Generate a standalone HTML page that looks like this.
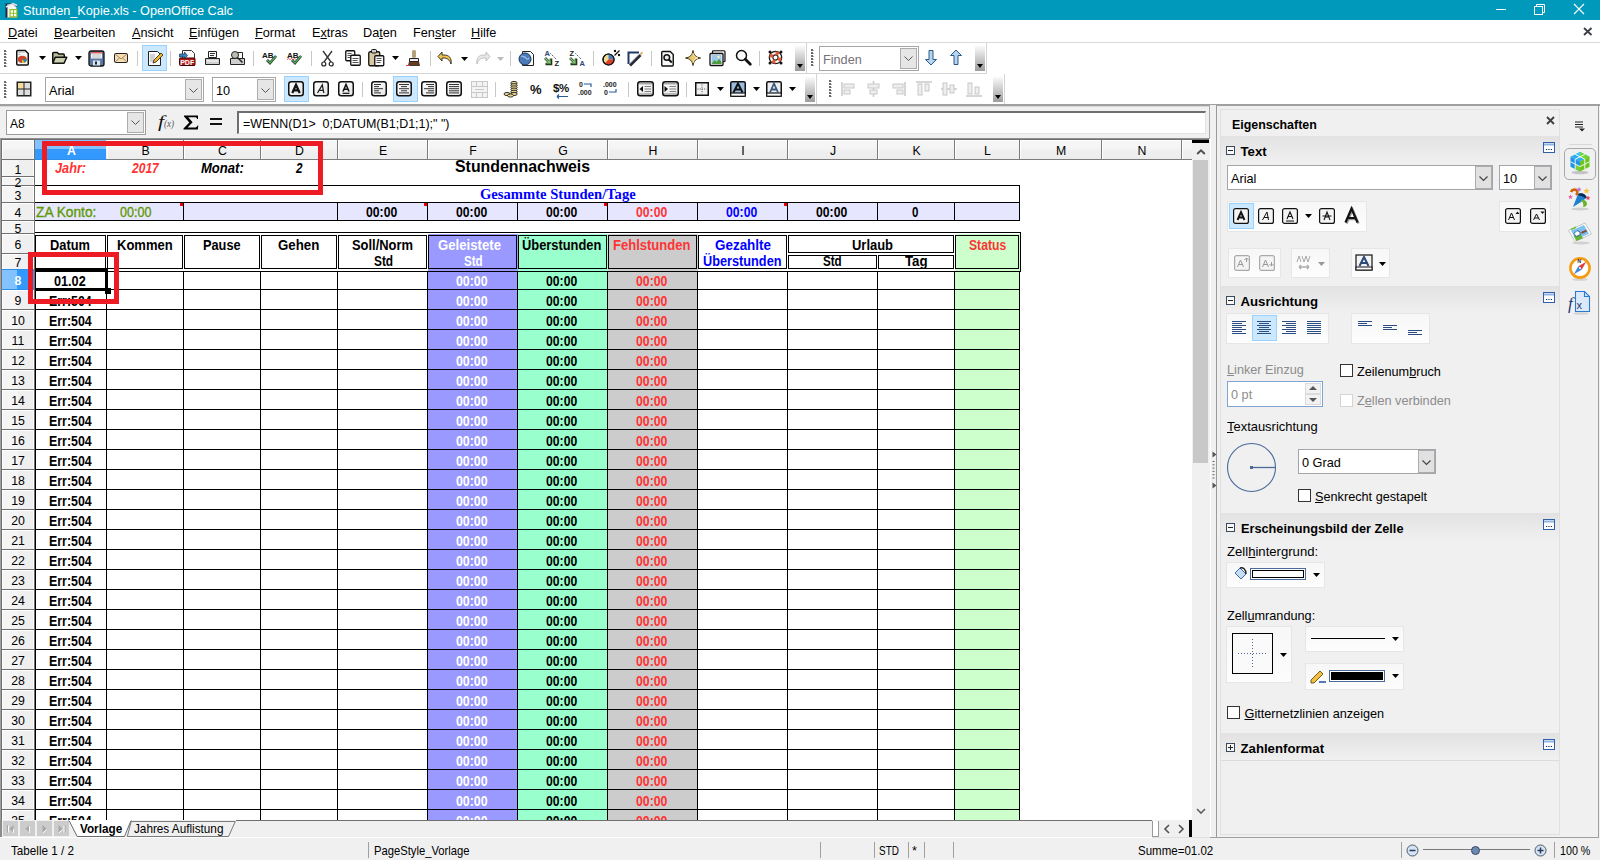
<!DOCTYPE html><html><head><meta charset="utf-8"><style>
*{margin:0;padding:0;box-sizing:border-box}
html,body{width:1600px;height:860px;overflow:hidden;background:#fff;font-family:"Liberation Sans",sans-serif;position:relative}
body>div,div.a{position:absolute}
.t{position:absolute;white-space:nowrap;line-height:1}
svg{position:absolute;overflow:visible}
u{text-decoration:underline;text-decoration-thickness:1px;text-underline-offset:0.5px}
</style></head><body><div style="left:0px;top:0px;width:1600px;height:20px;background:#0099bc"></div>
<svg style="left:3px;top:2px;" width="16" height="16" viewBox="0 0 16 16"><path d="M2.5 1.5h8l3 3v11h-11z" fill="#1c2638"/><path d="M4.5 2.5h6l3 3v10h-9z" fill="#f4f4f4" stroke="#9aa4ae" stroke-width="0.6"/><path d="M3 5L10 1.5 14 3.5" fill="none" stroke="#dfe6ea" stroke-width="1.4"/><rect x="6.5" y="7" width="8" height="8.5" fill="#8cc21f"/><path d="M7.7 8.3h2.3v2.5H7.7zM11 8.3h2.3v2.5H11zM7.7 11.8h2.3v2.5H7.7zM11 11.8h2.3v2.5H11z" fill="#fff"/></svg>
<div class="t" style="left:23px;top:5px;font-size:12.7px;color:#fff">Stunden_Kopie.xls - OpenOffice Calc</div>
<div style="left:1496px;top:9px;width:10px;height:1px;background:#fff"></div>
<svg style="left:1533px;top:3px;" width="13" height="13" viewBox="0 0 13 13"><rect x="1.5" y="3.5" width="8" height="8" fill="none" stroke="#fff"/><path d="M3.5 3.5V1.5h8v8h-2" fill="none" stroke="#fff"/></svg>
<svg style="left:1573px;top:3px;" width="12" height="12" viewBox="0 0 12 12"><path d="M1 1L11 11M11 1L1 11" stroke="#fff" stroke-width="1.1"/></svg>
<div class="t" style="left:8px;top:27px;font-size:12.7px;color:#000"><u>D</u>atei</div>
<div class="t" style="left:54px;top:27px;font-size:12.7px;color:#000"><u>B</u>earbeiten</div>
<div class="t" style="left:132px;top:27px;font-size:12.7px;color:#000"><u>A</u>nsicht</div>
<div class="t" style="left:189px;top:27px;font-size:12.7px;color:#000"><u>E</u>infügen</div>
<div class="t" style="left:255px;top:27px;font-size:12.7px;color:#000"><u>F</u>ormat</div>
<div class="t" style="left:312px;top:27px;font-size:12.7px;color:#000">E<u>x</u>tras</div>
<div class="t" style="left:363px;top:27px;font-size:12.7px;color:#000">Da<u>t</u>en</div>
<div class="t" style="left:413px;top:27px;font-size:12.7px;color:#000">Fen<u>s</u>ter</div>
<div class="t" style="left:471px;top:27px;font-size:12.7px;color:#000"><u>H</u>ilfe</div>
<svg style="left:1583px;top:27px;" width="10" height="9" viewBox="0 0 10 9"><path d="M1 1L8.5 8M8.5 1L1 8" stroke="#3a3f45" stroke-width="1.8"/></svg>
<div style="left:0px;top:42px;width:1600px;height:1px;background:#dadada"></div>
<div style="left:0px;top:43px;width:1600px;height:31px;background:#fff"></div>
<div style="left:0px;top:73px;width:806px;height:1px;background:#d4d4d4"></div>
<div style="left:806px;top:73px;width:180px;height:1px;background:#d4d4d4"></div>
<div style="left:0px;top:74px;width:1600px;height:30px;background:#fff"></div>
<div style="left:0px;top:104px;width:1600px;height:2px;background:#a0a0a0"></div>
<div style="left:0px;top:106px;width:1600px;height:1px;background:#d8d8d8"></div>
<div style="left:4px;top:50px;width:1.5px;height:1.5px;background:#6a6a6a"></div>
<div style="left:5.5px;top:51px;width:1px;height:1px;background:#b0b0b0"></div>
<div style="left:4px;top:53px;width:1.5px;height:1.5px;background:#6a6a6a"></div>
<div style="left:5.5px;top:54px;width:1px;height:1px;background:#b0b0b0"></div>
<div style="left:4px;top:56px;width:1.5px;height:1.5px;background:#6a6a6a"></div>
<div style="left:5.5px;top:57px;width:1px;height:1px;background:#b0b0b0"></div>
<div style="left:4px;top:59px;width:1.5px;height:1.5px;background:#6a6a6a"></div>
<div style="left:5.5px;top:60px;width:1px;height:1px;background:#b0b0b0"></div>
<div style="left:4px;top:62px;width:1.5px;height:1.5px;background:#6a6a6a"></div>
<div style="left:5.5px;top:63px;width:1px;height:1px;background:#b0b0b0"></div>
<div style="left:4px;top:65px;width:1.5px;height:1.5px;background:#6a6a6a"></div>
<div style="left:5.5px;top:66px;width:1px;height:1px;background:#b0b0b0"></div>
<div style="left:4px;top:81px;width:1.5px;height:1.5px;background:#6a6a6a"></div>
<div style="left:5.5px;top:82px;width:1px;height:1px;background:#b0b0b0"></div>
<div style="left:4px;top:84px;width:1.5px;height:1.5px;background:#6a6a6a"></div>
<div style="left:5.5px;top:85px;width:1px;height:1px;background:#b0b0b0"></div>
<div style="left:4px;top:87px;width:1.5px;height:1.5px;background:#6a6a6a"></div>
<div style="left:5.5px;top:88px;width:1px;height:1px;background:#b0b0b0"></div>
<div style="left:4px;top:90px;width:1.5px;height:1.5px;background:#6a6a6a"></div>
<div style="left:5.5px;top:91px;width:1px;height:1px;background:#b0b0b0"></div>
<div style="left:4px;top:93px;width:1.5px;height:1.5px;background:#6a6a6a"></div>
<div style="left:5.5px;top:94px;width:1px;height:1px;background:#b0b0b0"></div>
<div style="left:4px;top:96px;width:1.5px;height:1.5px;background:#6a6a6a"></div>
<div style="left:5.5px;top:97px;width:1px;height:1px;background:#b0b0b0"></div>
<svg style="left:15px;top:49px;" width="15" height="17" viewBox="0 0 15 17"><path d="M1.75 2.5a1 1 0 0 1 1-1h7.5l3 3v10.5a1 1 0 0 1-1 1h-9.5a1 1 0 0 1-1-1z" fill="#f6f6f6" stroke="#111" stroke-width="1.5"/><path d="M3.5 3.5h2M6.5 3.5h1M8.5 3.5h1M3.5 5.5h2" stroke="#999" stroke-width="0.8"/><ellipse cx="7.3" cy="10.3" rx="4.5" ry="3.6" fill="#c9472e"/><path d="M7.3 10.3h4.5a4.5 3.6 0 0 1-2.3 3.1z" fill="#1f8aa8"/><path d="M7.3 10.3l2.2 3.1a4.5 3.6 0 0 1-2.6 0.5z" fill="#d8cf2a"/></svg>
<svg style="left:39px;top:56px;" width="7" height="4" viewBox="0 0 7 4"><path d="M0 0h7L3.5 4z" fill="#000"/></svg>
<svg style="left:51px;top:51px;" width="17" height="14" viewBox="0 0 17 14"><path d="M1.75 11.5V2.5a1 1 0 0 1 1-1h3.5l1.5 1.5h4.5a1 1 0 0 1 1 1v2" fill="#b9bd98" stroke="#111" stroke-width="1.5"/><path d="M1.75 12.25l2.5-6h11.5l-2.7 6z" fill="#cdd1ae" stroke="#111" stroke-width="1.5" stroke-linejoin="round"/></svg>
<svg style="left:75px;top:56px;" width="7" height="4" viewBox="0 0 7 4"><path d="M0 0h7L3.5 4z" fill="#000"/></svg>
<svg style="left:88px;top:50px;" width="17" height="17" viewBox="0 0 17 17"><rect x="1" y="1" width="15" height="15" rx="2" fill="#5b7ba6" stroke="#111" stroke-width="1.3"/><rect x="3" y="2" width="11" height="6.5" fill="#f4f4f4"/><rect x="3" y="2" width="11" height="1.5" fill="#e06060"/><path d="M4 5h9M4 7h9" stroke="#aaa" stroke-width="0.7"/><rect x="5" y="10.5" width="7" height="5" fill="#dfe5ee"/><rect x="7" y="11.5" width="2" height="3" fill="#223"/></svg>
<svg style="left:114px;top:53px;" width="14" height="10" viewBox="0 0 14 10"><rect x="0.5" y="0.5" width="13" height="9" rx="1" fill="#f5deb3" stroke="#222"/><path d="M1 1l6 5 6-5M1 9l4.5-4M13 9l-4.5-4" fill="none" stroke="#a08a60"/></svg>
<div style="left:137px;top:51px;width:1px;height:15px;background:#c8c8c8"></div>
<div style="left:142px;top:45px;width:25px;height:26px;background:#cce8ff;border:1px solid #99d1ff"></div>
<svg style="left:147px;top:50px;" width="16" height="17" viewBox="0 0 16 17"><path d="M1.5 1.5h9l3 3v11h-12z" fill="#fafafa" stroke="#222"/><path d="M3 5h5M3 7h5M3 9h4M3 11h4" stroke="#aaa"/><path d="M6 13l1-3 7-7 2 2-7 7z" fill="#f0b429" stroke="#222" stroke-width="0.8"/></svg>
<div style="left:170px;top:51px;width:1px;height:15px;background:#c8c8c8"></div>
<svg style="left:179px;top:50px;" width="17" height="16" viewBox="0 0 17 16"><path d="M3.5 0.5h9l3 3v12h-12z" fill="#fafafa" stroke="#333"/><rect x="0.5" y="8" width="15.5" height="7.5" rx="1" fill="#b01c1c" stroke="#400"/><text x="8.2" y="14.5" font-family="Liberation Sans" font-weight="bold" font-size="7" fill="#fff" text-anchor="middle">PDF</text><path d="M0.5 4h5v-2l3 3.5-3 3.5v-2h-5z" fill="#3a7fc4" stroke="#123" stroke-width="0.6"/></svg>
<svg style="left:204px;top:50px;" width="17" height="17" viewBox="0 0 17 17"><path d="M4.5 1.5h8v6h-8z" fill="#fafafa" stroke="#222"/><path d="M6 3.5h5M6 5.5h4" stroke="#333"/><path d="M1.5 8.5h14v6h-14z" fill="#cfcfcf" stroke="#222"/><path d="M3 11h11" stroke="#fff"/></svg>
<svg style="left:229px;top:50px;" width="17" height="17" viewBox="0 0 17 17"><path d="M4.5 2.5h9v6h-9z" fill="#fafafa" stroke="#222"/><path d="M1.5 8.5h14v6h-14z" fill="#cfcfcf" stroke="#222"/><circle cx="6" cy="5" r="3.5" fill="#b9c0b0" stroke="#222"/><path d="M8.5 7.5l5 5" stroke="#222" stroke-width="1.5"/></svg>
<div style="left:253px;top:51px;width:1px;height:15px;background:#c8c8c8"></div>
<svg style="left:262px;top:51px;" width="16" height="14" viewBox="0 0 16 14"><text x="0" y="7" font-family="Liberation Sans" font-weight="bold" font-size="8" fill="#111">AB</text><path d="M5 9l3 3 6-7" fill="none" stroke="#222" stroke-width="2.6"/><path d="M5 9l3 3 6-7" fill="none" stroke="#4fb05a" stroke-width="1.4"/></svg>
<svg style="left:287px;top:51px;" width="16" height="14" viewBox="0 0 16 14"><text x="0" y="7" font-family="Liberation Sans" font-weight="bold" font-size="8" fill="#111">AB</text><path d="M0 8.5l1.5-1 1.5 1 1.5-1 1.5 1 1.5-1 1.5 1" fill="none" stroke="#e33" stroke-width="0.8"/><path d="M5 9l3 3 6-7" fill="none" stroke="#222" stroke-width="2.6"/><path d="M5 9l3 3 6-7" fill="none" stroke="#4fb05a" stroke-width="1.4"/></svg>
<div style="left:311px;top:51px;width:1px;height:15px;background:#c8c8c8"></div>
<svg style="left:321px;top:50px;" width="13" height="17" viewBox="0 0 13 17"><path d="M2 1l8 11M11 1L3 12" stroke="#333" stroke-width="1.3"/><circle cx="2.8" cy="14" r="2" fill="#fff" stroke="#222" stroke-width="1.2"/><circle cx="10.2" cy="14" r="2" fill="#fff" stroke="#222" stroke-width="1.2"/></svg>
<svg style="left:345px;top:50px;" width="16" height="16" viewBox="0 0 16 16"><rect x="0.75" y="0.75" width="9" height="10" rx="1" fill="#fafafa" stroke="#111" stroke-width="1.3"/><path d="M2.5 3.5h4M2.5 5.5h5M2.5 7.5h3" stroke="#555"/><rect x="5.75" y="5.25" width="9.5" height="10" rx="1" fill="#fafafa" stroke="#111" stroke-width="1.3"/><path d="M7.5 8.5h6M7.5 10.5h5M7.5 12.5h6" stroke="#555"/></svg>
<svg style="left:368px;top:49px;" width="17" height="18" viewBox="0 0 17 18"><rect x="0.75" y="2.75" width="11" height="14" rx="1.5" fill="#d8c9a3" stroke="#111" stroke-width="1.3"/><rect x="3.5" y="0.5" width="5" height="3.5" rx="1" fill="#cfcfcf" stroke="#111"/><rect x="6.75" y="6.75" width="9" height="10" rx="1" fill="#fafafa" stroke="#111" stroke-width="1.3"/><path d="M8.5 9.5h5M8.5 11.5h5M8.5 13.5h4" stroke="#555"/></svg>
<svg style="left:392px;top:56px;" width="7" height="4" viewBox="0 0 7 4"><path d="M0 0h7L3.5 4z" fill="#000"/></svg>
<svg style="left:406px;top:49px;" width="16" height="18" viewBox="0 0 16 18"><path d="M8 1.5v7" stroke="#5a4a2a" stroke-width="3"/><path d="M8 1.5v7" stroke="#d5b56a" stroke-width="1.6"/><path d="M3.5 9.5h9v3h-9z" fill="#eee" stroke="#222"/><path d="M3.5 12.5h9l1 4h-11z" fill="#6a3a1a" stroke="#222" stroke-width="0.8"/><path d="M0 16.5h4" stroke="#c44" stroke-width="1"/></svg>
<div style="left:430px;top:51px;width:1px;height:15px;background:#c8c8c8"></div>
<svg style="left:437px;top:50px;" width="16" height="16" viewBox="0 0 16 16"><path d="M14 14c1-6-2-9-7-9H5V2L1 6.5 5 11V8h2c3 0 6 2 7 6z" fill="#f3c34a" stroke="#222" stroke-width="0.9"/></svg>
<svg style="left:461px;top:57px;" width="7" height="4" viewBox="0 0 7 4"><path d="M0 0h7L3.5 4z" fill="#000"/></svg>
<svg style="left:475px;top:50px;" width="16" height="16" viewBox="0 0 16 16"><path d="M2 14c-1-6 2-9 7-9h2V2l4 4.5L11 11V8H9c-3 0-6 2-7 6z" fill="#e8e8e8" stroke="#bbb" stroke-width="0.9"/></svg>
<svg style="left:497px;top:57px;" width="7" height="4" viewBox="0 0 7 4"><path d="M0 0h7L3.5 4z" fill="#bbb"/></svg>
<div style="left:510px;top:51px;width:1px;height:15px;background:#c8c8c8"></div>
<svg style="left:518px;top:50px;" width="17" height="16" viewBox="0 0 17 16"><path d="M4.5 1.5h8l3 3v11h-11z" fill="#fafafa" stroke="#222"/><circle cx="7" cy="9" r="6" fill="#4a7ab8" stroke="#1d3555"/><path d="M3 6c2 1 4 0 5 2s2 1 3 0" fill="none" stroke="#9ec1ea" stroke-width="1.2"/></svg>
<svg style="left:543px;top:49px;" width="18" height="18" viewBox="0 0 18 18"><text x="1.5" y="7" font-family="Liberation Sans" font-weight="bold" font-size="7.5" fill="#2a4a78">A</text><text x="11.5" y="16.5" font-family="Liberation Sans" font-weight="bold" font-size="7.5" fill="#222">Z</text><path d="M7.5 4.5l6 6" stroke="#222" stroke-dasharray="1 1.3"/><path d="M2 9l5.5 5.5M8 9.5v5.5H2.5" fill="none" stroke="#1f3a1f" stroke-width="2.6"/><path d="M2 9l5.5 5.5M7 10.5v3.5H3.5" fill="none" stroke="#8fd07a" stroke-width="1.1"/></svg>
<svg style="left:568px;top:49px;" width="18" height="18" viewBox="0 0 18 18"><text x="1.5" y="7" font-family="Liberation Sans" font-weight="bold" font-size="7.5" fill="#222">Z</text><text x="11.5" y="16.5" font-family="Liberation Sans" font-weight="bold" font-size="7.5" fill="#2a4a78">A</text><path d="M7.5 4.5l6 6" stroke="#222" stroke-dasharray="1 1.3"/><path d="M2 9l5.5 5.5M8 9.5v5.5H2.5" fill="none" stroke="#1f3a1f" stroke-width="2.6"/><path d="M2 9l5.5 5.5M7 10.5v3.5H3.5" fill="none" stroke="#8fd07a" stroke-width="1.1"/></svg>
<div style="left:593px;top:51px;width:1px;height:15px;background:#c8c8c8"></div>
<svg style="left:601px;top:49px;" width="20" height="18" viewBox="0 0 20 18"><circle cx="7.5" cy="10.5" r="5.5" fill="#f0d890" stroke="#111" stroke-width="1.2"/><path d="M7.5 10.5V5a5.5 5.5 0 0 1 5.5 5.5z" fill="#4a78b8"/><path d="M7.5 10.5H13a5.5 5.5 0 0 1-9.4 3.9z" fill="#d8402a"/><circle cx="7.5" cy="10.5" r="5.5" fill="none" stroke="#111" stroke-width="1.2"/><path d="M13.5 6.5l5-5" stroke="#111" stroke-width="1.2"/><circle cx="14" cy="2" r="1.2" fill="#111"/><circle cx="18" cy="6" r="1.2" fill="#111"/></svg>
<svg style="left:627px;top:50px;" width="17" height="16" viewBox="0 0 17 16"><path d="M1.5 14V2.5H12" fill="none" stroke="#1f3a68" stroke-width="2"/><path d="M2 14.5l10.5-10.5 2 2L4 16.5z" fill="#2a2a2a"/><path d="M12.5 4l2.5-2.5 1 1-2 3z" fill="#d8b070"/><path d="M3 13.5l9-9" stroke="#7a9ad0" stroke-width="0.8"/></svg>
<div style="left:651px;top:51px;width:1px;height:15px;background:#c8c8c8"></div>
<svg style="left:660px;top:50px;" width="16" height="16" viewBox="0 0 16 16"><path d="M1.75 2.5a1 1 0 0 1 1-1h7.5l3 3v10.5a1 1 0 0 1-1 1h-9.5a1 1 0 0 1-1-1z" fill="#f8f8f8" stroke="#111" stroke-width="1.4"/><circle cx="6.8" cy="7.5" r="2.8" fill="#e8eef4" stroke="#111" stroke-width="1.5"/><path d="M8.8 9.5l3 3" stroke="#111" stroke-width="2"/></svg>
<svg style="left:685px;top:50px;" width="16" height="16" viewBox="0 0 16 16"><path d="M8 0.5C8.6 5 11 7.4 15.5 8 11 8.6 8.6 11 8 15.5 7.4 11 5 8.6 0.5 8 5 7.4 7.4 5 8 0.5z" fill="#e8c870" stroke="#3a2a10" stroke-width="1"/><path d="M8 3c.4 3 1.8 4.5 5 5-3 .4-4.6 2-5 5" fill="none" stroke="#fff4c0" stroke-width="0.8"/></svg>
<svg style="left:709px;top:50px;" width="17" height="17" viewBox="0 0 17 17"><rect x="3.5" y="0.75" width="12.5" height="11" rx="1" fill="#e8e8e8" stroke="#111" stroke-width="1.2"/><rect x="1" y="3.5" width="13" height="12" rx="1" fill="#fff" stroke="#111" stroke-width="1.3"/><rect x="2.5" y="5" width="10" height="9" fill="#9cc8ec"/><path d="M2.5 14l3-4 2 2 2.5-3 2.5 3v2z" fill="#4a9a3a"/><circle cx="9.5" cy="7" r="1.2" fill="#fff6b0"/></svg>
<svg style="left:735px;top:49px;" width="17" height="17" viewBox="0 0 17 17"><circle cx="6.5" cy="6.5" r="5" fill="#fafafa" stroke="#111" stroke-width="1.5"/><path d="M10.3 10.3l5 5" stroke="#111" stroke-width="2.8" stroke-linecap="round"/></svg>
<div style="left:759px;top:51px;width:1px;height:15px;background:#c8c8c8"></div>
<svg style="left:767px;top:49px;" width="17" height="17" viewBox="0 0 17 17"><circle cx="8.5" cy="8.5" r="6.2" fill="#fff" stroke="#111" stroke-width="1.3"/><circle cx="8.5" cy="8.5" r="2.6" fill="#fff" stroke="#111" stroke-width="1.1"/><g stroke="#e05a3a" stroke-width="3.2" fill="none"><path d="M12.7 4.3a6 6 0 0 1 0 0" /></g><path d="M8.5 2.3a6.2 6.2 0 0 1 4.4 1.8L10.3 6.7a2.6 2.6 0 0 0-1.8-.8z M14.7 8.5a6.2 6.2 0 0 1-1.8 4.4l-2.6-2.6a2.6 2.6 0 0 0 .8-1.8z M8.5 14.7a6.2 6.2 0 0 1-4.4-1.8l2.6-2.6a2.6 2.6 0 0 0 1.8.8z M2.3 8.5a6.2 6.2 0 0 1 1.8-4.4l2.6 2.6a2.6 2.6 0 0 0-.8 1.8z" fill="#e05a3a"/><g fill="#111"><circle cx="3" cy="3" r="1.5"/><circle cx="14" cy="3" r="1.5"/><circle cx="3" cy="14" r="1.5"/><circle cx="14" cy="14" r="1.5"/></g></svg>
<div style="left:795px;top:46px;width:10px;height:25px;background:linear-gradient(#fafafa,#9c9c9c)"></div>
<svg style="left:797px;top:64px;" width="7" height="4" viewBox="0 0 7 4"><path d="M0 0h6L3 4z" fill="#000"/></svg>
<div style="left:806px;top:43px;width:1px;height:31px;background:#d4d4d4"></div>
<div style="left:811px;top:49px;width:1.5px;height:1.5px;background:#6a6a6a"></div>
<div style="left:812.5px;top:50px;width:1px;height:1px;background:#b0b0b0"></div>
<div style="left:811px;top:52px;width:1.5px;height:1.5px;background:#6a6a6a"></div>
<div style="left:812.5px;top:53px;width:1px;height:1px;background:#b0b0b0"></div>
<div style="left:811px;top:55px;width:1.5px;height:1.5px;background:#6a6a6a"></div>
<div style="left:812.5px;top:56px;width:1px;height:1px;background:#b0b0b0"></div>
<div style="left:811px;top:58px;width:1.5px;height:1.5px;background:#6a6a6a"></div>
<div style="left:812.5px;top:59px;width:1px;height:1px;background:#b0b0b0"></div>
<div style="left:811px;top:61px;width:1.5px;height:1.5px;background:#6a6a6a"></div>
<div style="left:812.5px;top:62px;width:1px;height:1px;background:#b0b0b0"></div>
<div style="left:811px;top:64px;width:1.5px;height:1.5px;background:#6a6a6a"></div>
<div style="left:812.5px;top:65px;width:1px;height:1px;background:#b0b0b0"></div>
<div style="left:819px;top:46px;width:100px;height:25px;background:#fff;border:1px solid #a6a6a6"></div>
<div class="t" style="left:823px;top:54px;font-size:12.7px;color:#77707a">Finden</div>
<div style="left:900px;top:48px;width:17px;height:21px;background:#e6e6e6;border:1px solid #adadad"></div>
<svg style="left:904px;top:56px;" width="9" height="5" viewBox="0 0 9 5"><path d="M0.5 0.5L4.5 4.5 8.5 0.5" fill="none" stroke="#555"/></svg>
<svg style="left:924px;top:49px;" width="14" height="17" viewBox="0 0 14 17"><path d="M5 1.5h4v9h3.5L7 16 1.5 10.5H5z" fill="#b9d4ee" stroke="#2a5a8a"/></svg>
<svg style="left:949px;top:49px;" width="14" height="17" viewBox="0 0 14 17"><path d="M5 15.5h4v-9h3.5L7 1 1.5 6.5H5z" fill="#b9d4ee" stroke="#2a5a8a"/></svg>
<div style="left:975px;top:46px;width:10px;height:25px;background:linear-gradient(#fafafa,#9c9c9c)"></div>
<svg style="left:977px;top:64px;" width="7" height="4" viewBox="0 0 7 4"><path d="M0 0h6L3 4z" fill="#000"/></svg>
<div style="left:986px;top:43px;width:1px;height:31px;background:#d4d4d4"></div>
<svg style="left:16px;top:81px;" width="16" height="16" viewBox="0 0 16 16"><rect x="0.5" y="0.5" width="15" height="15" fill="#222"/><rect x="2" y="2" width="5.5" height="5.5" fill="#f5dc9a"/><rect x="8.5" y="2" width="5.5" height="5.5" fill="#ddd"/><rect x="2" y="8.5" width="5.5" height="5.5" fill="#ddd"/><rect x="8.5" y="8.5" width="5.5" height="5.5" fill="#ddd"/></svg>
<div style="left:45px;top:77px;width:159px;height:25px;background:#fff;border:1px solid #a6a6a6"></div>
<div class="t" style="left:49px;top:85px;font-size:12.7px;color:#000">Arial</div>
<div style="left:185px;top:79px;width:17px;height:21px;background:#e6e6e6;border:1px solid #adadad"></div>
<svg style="left:189px;top:87.5px;" width="9" height="5" viewBox="0 0 9 5"><path d="M0.5 0.5L4.5 4.5 8.5 0.5" fill="none" stroke="#555"/></svg>
<div style="left:212px;top:77px;width:64px;height:25px;background:#fff;border:1px solid #a6a6a6"></div>
<div class="t" style="left:216px;top:85px;font-size:12.7px;color:#000">10</div>
<div style="left:257px;top:79px;width:17px;height:21px;background:#e6e6e6;border:1px solid #adadad"></div>
<svg style="left:261px;top:87.5px;" width="9" height="5" viewBox="0 0 9 5"><path d="M0.5 0.5L4.5 4.5 8.5 0.5" fill="none" stroke="#555"/></svg>
<div style="left:284px;top:76px;width:25px;height:26px;background:#cce8ff;border:1px solid #99d1ff"></div>
<svg style="left:288px;top:81px;" width="16" height="16" viewBox="0 0 16 16"><defs><linearGradient id="g1" x1="0" y1="0" x2="1" y2="1"><stop offset="0" stop-color="#fff"/><stop offset="1" stop-color="#e4e4e4"/></linearGradient></defs><rect x="0.75" y="0.75" width="14.5" height="14" rx="2.5" fill="url(#g1)" stroke="#111" stroke-width="1.5"/><path d="M4.3 12L8 3.8 11.7 12M5.6 9.3h4.8" fill="none" stroke="#111" stroke-width="2.3"/></svg>
<svg style="left:313px;top:81px;" width="16" height="16" viewBox="0 0 16 16"><defs><linearGradient id="g1" x1="0" y1="0" x2="1" y2="1"><stop offset="0" stop-color="#fff"/><stop offset="1" stop-color="#e4e4e4"/></linearGradient></defs><rect x="0.75" y="0.75" width="14.5" height="14" rx="2.5" fill="url(#g1)" stroke="#111" stroke-width="1.5"/><path d="M4.5 12L9.3 3.8 10.8 12M6.2 9.3h4.4" fill="none" stroke="#222" stroke-width="1.3"/></svg>
<svg style="left:338px;top:81px;" width="16" height="16" viewBox="0 0 16 16"><defs><linearGradient id="g1" x1="0" y1="0" x2="1" y2="1"><stop offset="0" stop-color="#fff"/><stop offset="1" stop-color="#e4e4e4"/></linearGradient></defs><rect x="0.75" y="0.75" width="14.5" height="14" rx="2.5" fill="url(#g1)" stroke="#111" stroke-width="1.5"/><path d="M5 10.5L8 3.5 11 10.5M6 8.3h4" fill="none" stroke="#111" stroke-width="1.6"/><path d="M4.5 12.3h7" stroke="#111" stroke-width="1.2"/></svg>
<div style="left:362px;top:82px;width:1px;height:15px;background:#c8c8c8"></div>
<svg style="left:371px;top:81px;" width="16" height="16" viewBox="0 0 16 16"><rect x="0.75" y="0.75" width="14.5" height="14" rx="2.5" fill="url(#g1)" stroke="#111" stroke-width="1.5"/><path d="M3 3.5H10" stroke="#333"/><path d="M3 5.6H8" stroke="#333"/><path d="M3 7.7H12" stroke="#333"/><path d="M3 9.8H8" stroke="#333"/><path d="M3 11.9H10" stroke="#333"/></svg>
<div style="left:393px;top:76px;width:25px;height:26px;background:#cce8ff;border:1px solid #99d1ff"></div>
<svg style="left:396px;top:81px;" width="16" height="16" viewBox="0 0 16 16"><rect x="0.75" y="0.75" width="14.5" height="14" rx="2.5" fill="url(#g1)" stroke="#111" stroke-width="1.5"/><path d="M3 3.5H13" stroke="#333"/><path d="M5 5.6H11" stroke="#333"/><path d="M3 7.7H13" stroke="#333"/><path d="M5 9.8H11" stroke="#333"/><path d="M3 11.9H13" stroke="#333"/></svg>
<svg style="left:421px;top:81px;" width="16" height="16" viewBox="0 0 16 16"><rect x="0.75" y="0.75" width="14.5" height="14" rx="2.5" fill="url(#g1)" stroke="#111" stroke-width="1.5"/><path d="M5 3.5H13" stroke="#333"/><path d="M7 5.6H13" stroke="#333"/><path d="M3 7.7H13" stroke="#333"/><path d="M7 9.8H13" stroke="#333"/><path d="M5 11.9H13" stroke="#333"/></svg>
<svg style="left:446px;top:81px;" width="16" height="16" viewBox="0 0 16 16"><rect x="0.75" y="0.75" width="14.5" height="14" rx="2.5" fill="url(#g1)" stroke="#111" stroke-width="1.5"/><path d="M3 3.5H13" stroke="#333"/><path d="M3 5.6H13" stroke="#333"/><path d="M3 7.7H13" stroke="#333"/><path d="M3 9.8H13" stroke="#333"/><path d="M3 11.9H13" stroke="#333"/></svg>
<svg style="left:471px;top:81px;" width="17" height="17" viewBox="0 0 17 17"><rect x="0.5" y="0.5" width="16" height="16" fill="#f4f4f4" stroke="#c8c8c8"/><path d="M0.5 5.5h16M0.5 11.5h16M5.5 0.5v5M11.5 0.5v5M5.5 11.5v5M11.5 11.5v5M4 8.5h9" stroke="#c8c8c8"/></svg>
<div style="left:495px;top:82px;width:1px;height:15px;background:#c8c8c8"></div>
<svg style="left:503px;top:80px;" width="17" height="18" viewBox="0 0 17 18"><g fill="#e8d48a" stroke="#222" stroke-width="0.9"><ellipse cx="11" cy="3.0" rx="3.2" ry="1.6"/><ellipse cx="11" cy="5.2" rx="3.2" ry="1.6"/><ellipse cx="11" cy="7.4" rx="3.2" ry="1.6"/><ellipse cx="11" cy="9.600000000000001" rx="3.2" ry="1.6"/><ellipse cx="11" cy="11.8" rx="3.2" ry="1.6"/><ellipse cx="11" cy="14.0" rx="3.2" ry="1.6"/><ellipse cx="4" cy="14" rx="3" ry="1.6"/><ellipse cx="7.5" cy="15.5" rx="3" ry="1.6"/></g></svg>
<div class="t" style="left:530px;top:83px;font-size:13px;font-weight:bold;color:#111">%</div>
<div class="t" style="left:553px;top:83px;font-size:11.5px;font-weight:bold;color:#111;letter-spacing:-0.5px">$%</div>
<svg style="left:554px;top:94px;" width="16" height="5" viewBox="0 0 16 5"><path d="M3 2.5h11M3 2.5l2-2M3 2.5l2 2" fill="none" stroke="#2a5a9a" stroke-width="1.2"/></svg>
<svg style="left:578px;top:80px;" width="17" height="17" viewBox="0 0 17 17"><text x="1" y="7" font-family="Liberation Sans" font-weight="bold" font-size="7" fill="#222">0</text><path d="M6 4h7v3" fill="none" stroke="#2a5a9a" stroke-width="1.2"/><text x="0" y="15" font-family="Liberation Sans" font-weight="bold" font-size="7" fill="#222">.000</text></svg>
<svg style="left:603px;top:80px;" width="17" height="17" viewBox="0 0 17 17"><text x="0" y="7" font-family="Liberation Sans" font-weight="bold" font-size="7" fill="#222">.000</text><path d="M13 9v3H6" fill="none" stroke="#2a5a9a" stroke-width="1.2"/><text x="1" y="15" font-family="Liberation Sans" font-weight="bold" font-size="7" fill="#222">0</text></svg>
<div style="left:628px;top:82px;width:1px;height:15px;background:#c8c8c8"></div>
<svg style="left:637px;top:81px;" width="17" height="16" viewBox="0 0 17 16"><rect x="0.75" y="0.75" width="15.5" height="14" rx="2.5" fill="url(#g1)" stroke="#111" stroke-width="1.5"/><path d="M2 2.8h13M7.5 5.5h6.5M7.5 8h6.5M7.5 10.5h6.5M2 13h13" stroke="#777" stroke-width="0.9"/><path d="M2.5 8l3.5-3v6z" fill="#111"/></svg>
<svg style="left:662px;top:81px;" width="17" height="16" viewBox="0 0 17 16"><rect x="0.75" y="0.75" width="15.5" height="14" rx="2.5" fill="url(#g1)" stroke="#111" stroke-width="1.5"/><path d="M2 2.8h13M7.5 5.5h6.5M7.5 8h6.5M7.5 10.5h6.5M2 13h13" stroke="#777" stroke-width="0.9"/><path d="M6 8l-3.5-3v6z" fill="#111"/></svg>
<div style="left:686px;top:82px;width:1px;height:15px;background:#c8c8c8"></div>
<svg style="left:695px;top:82px;" width="14" height="14" viewBox="0 0 14 14"><rect x="0.75" y="0.75" width="12.5" height="12.5" fill="#f0f0f0" stroke="#111" stroke-width="1.5"/><path d="M7 2.5v9M2.5 7h9" stroke="#555" stroke-dasharray="1 1.2"/></svg>
<svg style="left:717px;top:87px;" width="7" height="4" viewBox="0 0 7 4"><path d="M0 0h7L3.5 4z" fill="#000"/></svg>
<svg style="left:730px;top:81px;" width="16" height="16" viewBox="0 0 16 16"><rect x="0.75" y="0.75" width="14.5" height="14.5" rx="1.5" fill="#9dbbe0" stroke="#111" stroke-width="1.5"/><rect x="0.75" y="12" width="14.5" height="3.25" fill="#fff" stroke="#111" stroke-width="1.2"/><path d="M3.5 11.5L8 2.5 12.5 11.5M5.3 8.5h5.4" fill="none" stroke="#111" stroke-width="2"/></svg>
<svg style="left:753px;top:87px;" width="7" height="4" viewBox="0 0 7 4"><path d="M0 0h7L3.5 4z" fill="#000"/></svg>
<svg style="left:766px;top:81px;" width="16" height="16" viewBox="0 0 16 16"><rect x="0.75" y="0.75" width="14.5" height="14.5" rx="1.5" fill="#eeeeee" stroke="#111" stroke-width="1.5"/><rect x="0.75" y="12" width="14.5" height="3.25" fill="#fff" stroke="#111" stroke-width="1.2"/><path d="M4 11.5L8 2.5 12 11.5M5.5 8.5h5" fill="none" stroke="#3a5a80" stroke-width="1.8"/></svg>
<svg style="left:789px;top:87px;" width="7" height="4" viewBox="0 0 7 4"><path d="M0 0h7L3.5 4z" fill="#000"/></svg>
<div style="left:805px;top:77px;width:10px;height:25px;background:linear-gradient(#fafafa,#9c9c9c)"></div>
<svg style="left:807px;top:95px;" width="7" height="4" viewBox="0 0 7 4"><path d="M0 0h6L3 4z" fill="#000"/></svg>
<div style="left:816px;top:74px;width:1px;height:30px;background:#d4d4d4"></div>
<div style="left:829px;top:80px;width:1.5px;height:1.5px;background:#6a6a6a"></div>
<div style="left:830.5px;top:81px;width:1px;height:1px;background:#b0b0b0"></div>
<div style="left:829px;top:83px;width:1.5px;height:1.5px;background:#6a6a6a"></div>
<div style="left:830.5px;top:84px;width:1px;height:1px;background:#b0b0b0"></div>
<div style="left:829px;top:86px;width:1.5px;height:1.5px;background:#6a6a6a"></div>
<div style="left:830.5px;top:87px;width:1px;height:1px;background:#b0b0b0"></div>
<div style="left:829px;top:89px;width:1.5px;height:1.5px;background:#6a6a6a"></div>
<div style="left:830.5px;top:90px;width:1px;height:1px;background:#b0b0b0"></div>
<div style="left:829px;top:92px;width:1.5px;height:1.5px;background:#6a6a6a"></div>
<div style="left:830.5px;top:93px;width:1px;height:1px;background:#b0b0b0"></div>
<div style="left:829px;top:95px;width:1.5px;height:1.5px;background:#6a6a6a"></div>
<div style="left:830.5px;top:96px;width:1px;height:1px;background:#b0b0b0"></div>
<svg style="left:841px;top:81px;" width="16" height="16" viewBox="0 0 16 16"><path d="M1 1v14" stroke="#c8c8c8" stroke-width="1.5"/><rect x="3" y="3" width="10" height="4" fill="#eee" stroke="#c8c8c8"/><rect x="3" y="9" width="6" height="4" fill="#eee" stroke="#c8c8c8"/></svg>
<svg style="left:866px;top:81px;" width="16" height="16" viewBox="0 0 16 16"><path d="M7.5 0v16" stroke="#c8c8c8" stroke-width="1.5"/><rect x="2" y="3" width="11" height="4" fill="#eee" stroke="#c8c8c8"/><rect x="4" y="9" width="7" height="4" fill="#eee" stroke="#c8c8c8"/></svg>
<svg style="left:891px;top:81px;" width="16" height="16" viewBox="0 0 16 16"><path d="M14 1v14" stroke="#c8c8c8" stroke-width="1.5"/><rect x="2" y="3" width="10" height="4" fill="#eee" stroke="#c8c8c8"/><rect x="6" y="9" width="6" height="4" fill="#eee" stroke="#c8c8c8"/></svg>
<svg style="left:916px;top:81px;" width="16" height="16" viewBox="0 0 16 16"><path d="M0 1h16" stroke="#c8c8c8" stroke-width="1.5"/><rect x="2" y="3" width="4" height="11" fill="#eee" stroke="#c8c8c8"/><rect x="9" y="3" width="4" height="7" fill="#eee" stroke="#c8c8c8"/></svg>
<svg style="left:941px;top:81px;" width="16" height="16" viewBox="0 0 16 16"><path d="M0 8h16" stroke="#c8c8c8" stroke-width="1.5"/><rect x="2" y="2" width="4" height="12" fill="#eee" stroke="#c8c8c8"/><rect x="9" y="4" width="4" height="8" fill="#eee" stroke="#c8c8c8"/></svg>
<svg style="left:966px;top:81px;" width="16" height="16" viewBox="0 0 16 16"><path d="M0 15h16" stroke="#c8c8c8" stroke-width="1.5"/><rect x="2" y="2" width="4" height="11" fill="#eee" stroke="#c8c8c8"/><rect x="9" y="6" width="4" height="7" fill="#eee" stroke="#c8c8c8"/></svg>
<div style="left:993px;top:77px;width:10px;height:25px;background:linear-gradient(#fafafa,#9c9c9c)"></div>
<svg style="left:995px;top:95px;" width="7" height="4" viewBox="0 0 7 4"><path d="M0 0h6L3 4z" fill="#000"/></svg>
<div style="left:1004px;top:74px;width:1px;height:30px;background:#d4d4d4"></div>
<div style="left:0px;top:107px;width:1210px;height:31px;background:#f0f0f0"></div>
<div style="left:6px;top:110px;width:140px;height:25px;background:#fff;border:1px solid #9c9c9c"></div>
<div class="t" style="left:10px;top:118px;font-size:12px;color:#000">A8</div>
<div style="left:127px;top:112px;width:17px;height:21px;background:#e6e6e6;border:1px solid #adadad"></div>
<svg style="left:131px;top:120px;" width="9" height="5" viewBox="0 0 9 5"><path d="M0.5 0.5L4.5 4.5 8.5 0.5" fill="none" stroke="#555"/></svg>
<div class="t" style="left:158.30px;top:113px;font-size:17px;color:#111;font-style:italic;font-family:'Liberation Serif';transform:scaleX(1.2836);transform-origin:0 0;">f</div>
<div class="t" style="left:164.00px;top:119px;font-size:10px;color:#555;font-style:italic;font-family:'Liberation Serif';transform:scaleX(0.9009);transform-origin:0 0;">(x)</div>
<svg style="left:183px;top:115px;" width="16" height="15" viewBox="0 0 16 15"><path d="M1 0.5H15V4H14.2C13.8 2.6 13 2.2 11.5 2.2H5.2L9.6 7.2 4.6 12.6H11.6C13.2 12.6 14 12 14.5 10.6H15.3L14.8 14.5H0.5V13.6L6.3 7.4 1 1.4z" fill="#000"/></svg>
<div style="left:210px;top:118px;width:12px;height:2px;background:#111"></div>
<div style="left:210px;top:123px;width:12px;height:2px;background:#111"></div>
<div style="left:237px;top:111px;width:969px;height:23px;background:#fff;border-top:2px solid #6e6e6e;border-left:2px solid #6e6e6e;border-right:1px solid #e3e3e3;border-bottom:1px solid #e3e3e3"></div>
<div class="t" style="left:242.50px;top:118px;font-size:12.7px;color:#000;transform:scaleX(0.9815);transform-origin:0 0;">=WENN(D1&gt;&nbsp; 0;DATUM(B1;D1;1);"&nbsp;")</div>
<div style="left:0px;top:139px;width:1193px;height:681px;background:#fff"></div>
<div style="left:0px;top:138px;width:1209px;height:1px;background:#909090"></div>
<div style="left:0px;top:139px;width:1209px;height:1px;background:#6e6e6e"></div>
<div style="left:0px;top:139px;width:1px;height:681px;background:#a0a0a0"></div>
<div style="left:1px;top:139px;width:1px;height:681px;background:#707070"></div>
<div style="left:2px;top:140px;width:1190px;height:19px;background:linear-gradient(#f6f6f6 0,#f5f5f5 40%,#efefef 60%,#ededed 100%)"></div>
<div style="left:2px;top:140px;width:1190px;height:1px;background:#fff"></div>
<div style="left:2px;top:159px;width:1190px;height:1px;background:#7c7c7c"></div>
<div style="left:34px;top:139px;width:1px;height:681px;background:#707070"></div>
<div style="left:35px;top:140px;width:71px;height:19px;background:linear-gradient(#84c1ff 0,#84c1ff 47%,#3399ff 47%,#3399ff 100%)"></div>
<div style="left:35px;top:159px;width:72px;height:1px;background:#2f8fe6"></div>
<div class="t" style="left:36px;top:145px;width:71px;text-align:center;font-size:12.3px;color:#fff;font-weight:bold;">A</div>
<div style="left:107px;top:141px;width:1px;height:18px;background:#fff"></div>
<div class="t" style="left:107px;top:145px;width:77px;text-align:center;font-size:12.3px;color:#000;">B</div>
<div style="left:183px;top:140px;width:1px;height:19px;background:#7c7c7c"></div>
<div style="left:184px;top:141px;width:1px;height:18px;background:#fff"></div>
<div class="t" style="left:184px;top:145px;width:77px;text-align:center;font-size:12.3px;color:#000;">C</div>
<div style="left:260px;top:140px;width:1px;height:19px;background:#7c7c7c"></div>
<div style="left:261px;top:141px;width:1px;height:18px;background:#fff"></div>
<div class="t" style="left:261px;top:145px;width:77px;text-align:center;font-size:12.3px;color:#000;">D</div>
<div style="left:337px;top:140px;width:1px;height:19px;background:#7c7c7c"></div>
<div style="left:338px;top:141px;width:1px;height:18px;background:#fff"></div>
<div class="t" style="left:338px;top:145px;width:90px;text-align:center;font-size:12.3px;color:#000;">E</div>
<div style="left:427px;top:140px;width:1px;height:19px;background:#7c7c7c"></div>
<div style="left:428px;top:141px;width:1px;height:18px;background:#fff"></div>
<div class="t" style="left:428px;top:145px;width:90px;text-align:center;font-size:12.3px;color:#000;">F</div>
<div style="left:517px;top:140px;width:1px;height:19px;background:#7c7c7c"></div>
<div style="left:518px;top:141px;width:1px;height:18px;background:#fff"></div>
<div class="t" style="left:518px;top:145px;width:90px;text-align:center;font-size:12.3px;color:#000;">G</div>
<div style="left:607px;top:140px;width:1px;height:19px;background:#7c7c7c"></div>
<div style="left:608px;top:141px;width:1px;height:18px;background:#fff"></div>
<div class="t" style="left:608px;top:145px;width:90px;text-align:center;font-size:12.3px;color:#000;">H</div>
<div style="left:697px;top:140px;width:1px;height:19px;background:#7c7c7c"></div>
<div style="left:698px;top:141px;width:1px;height:18px;background:#fff"></div>
<div class="t" style="left:698px;top:145px;width:90px;text-align:center;font-size:12.3px;color:#000;">I</div>
<div style="left:787px;top:140px;width:1px;height:19px;background:#7c7c7c"></div>
<div style="left:788px;top:141px;width:1px;height:18px;background:#fff"></div>
<div class="t" style="left:788px;top:145px;width:90px;text-align:center;font-size:12.3px;color:#000;">J</div>
<div style="left:877px;top:140px;width:1px;height:19px;background:#7c7c7c"></div>
<div style="left:878px;top:141px;width:1px;height:18px;background:#fff"></div>
<div class="t" style="left:878px;top:145px;width:77px;text-align:center;font-size:12.3px;color:#000;">K</div>
<div style="left:954px;top:140px;width:1px;height:19px;background:#7c7c7c"></div>
<div style="left:955px;top:141px;width:1px;height:18px;background:#fff"></div>
<div class="t" style="left:955px;top:145px;width:65px;text-align:center;font-size:12.3px;color:#000;">L</div>
<div style="left:1019px;top:140px;width:1px;height:19px;background:#7c7c7c"></div>
<div style="left:1020px;top:141px;width:1px;height:18px;background:#fff"></div>
<div class="t" style="left:1020px;top:145px;width:82px;text-align:center;font-size:12.3px;color:#000;">M</div>
<div style="left:1101px;top:140px;width:1px;height:19px;background:#7c7c7c"></div>
<div style="left:1102px;top:141px;width:1px;height:18px;background:#fff"></div>
<div class="t" style="left:1102px;top:145px;width:80px;text-align:center;font-size:12.3px;color:#000;">N</div>
<div style="left:1181px;top:140px;width:1px;height:19px;background:#7c7c7c"></div>
<div style="left:1182px;top:141px;width:1px;height:18px;background:#fff"></div>
<div style="left:2px;top:160px;width:32px;height:660px;background:linear-gradient(90deg,#f5f5f5 0,#f5f5f5 50%,#efefef 50%,#efefef 100%)"></div>
<div style="left:2px;top:140px;width:1px;height:680px;background:#fff"></div>
<div style="left:33px;top:140px;width:1px;height:680px;background:#fff"></div>
<div style="left:2px;top:159px;width:32px;height:1px;background:#707070"></div>
<div style="left:2px;top:176px;width:32px;height:1px;background:#707070"></div>
<div style="left:2px;top:177px;width:31px;height:1px;background:#fff"></div>
<div class="t" style="left:2px;top:164px;width:32px;text-align:center;font-size:12.3px;color:#000">1</div>
<div style="left:2px;top:185px;width:32px;height:1px;background:#707070"></div>
<div style="left:2px;top:186px;width:31px;height:1px;background:#fff"></div>
<div class="t" style="left:2px;top:177px;width:32px;text-align:center;font-size:12.3px;color:#000">2</div>
<div style="left:2px;top:202px;width:32px;height:1px;background:#707070"></div>
<div style="left:2px;top:203px;width:31px;height:1px;background:#fff"></div>
<div class="t" style="left:2px;top:190px;width:32px;text-align:center;font-size:12.3px;color:#000">3</div>
<div style="left:2px;top:220px;width:32px;height:1px;background:#707070"></div>
<div style="left:2px;top:221px;width:31px;height:1px;background:#fff"></div>
<div class="t" style="left:2px;top:207px;width:32px;text-align:center;font-size:12.3px;color:#000">4</div>
<div style="left:2px;top:233px;width:32px;height:1px;background:#707070"></div>
<div style="left:2px;top:234px;width:31px;height:1px;background:#fff"></div>
<div class="t" style="left:2px;top:223px;width:32px;text-align:center;font-size:12.3px;color:#000">5</div>
<div style="left:2px;top:253px;width:32px;height:1px;background:#707070"></div>
<div style="left:2px;top:254px;width:31px;height:1px;background:#fff"></div>
<div class="t" style="left:2px;top:239px;width:32px;text-align:center;font-size:12.3px;color:#000">6</div>
<div style="left:2px;top:269px;width:32px;height:1px;background:#707070"></div>
<div style="left:2px;top:270px;width:31px;height:1px;background:#fff"></div>
<div class="t" style="left:2px;top:257px;width:32px;text-align:center;font-size:12.3px;color:#000">7</div>
<div style="left:2px;top:289px;width:32px;height:1px;background:#707070"></div>
<div style="left:2px;top:290px;width:31px;height:1px;background:#fff"></div>
<div style="left:2px;top:269px;width:32px;height:21px;background:#2f8fe6"></div>
<div style="left:2px;top:270px;width:32px;height:19px;background:linear-gradient(90deg,#84c1ff 0,#84c1ff 47%,#3399ff 47%,#3399ff 100%)"></div>
<div class="t" style="left:2px;top:275px;width:32px;text-align:center;font-size:12.3px;color:#fff;font-weight:bold">8</div>
<div style="left:2px;top:309px;width:32px;height:1px;background:#707070"></div>
<div style="left:2px;top:310px;width:31px;height:1px;background:#fff"></div>
<div class="t" style="left:2px;top:295px;width:32px;text-align:center;font-size:12.3px;color:#000">9</div>
<div style="left:2px;top:329px;width:32px;height:1px;background:#707070"></div>
<div style="left:2px;top:330px;width:31px;height:1px;background:#fff"></div>
<div class="t" style="left:2px;top:315px;width:32px;text-align:center;font-size:12.3px;color:#000">10</div>
<div style="left:2px;top:349px;width:32px;height:1px;background:#707070"></div>
<div style="left:2px;top:350px;width:31px;height:1px;background:#fff"></div>
<div class="t" style="left:2px;top:335px;width:32px;text-align:center;font-size:12.3px;color:#000">11</div>
<div style="left:2px;top:369px;width:32px;height:1px;background:#707070"></div>
<div style="left:2px;top:370px;width:31px;height:1px;background:#fff"></div>
<div class="t" style="left:2px;top:355px;width:32px;text-align:center;font-size:12.3px;color:#000">12</div>
<div style="left:2px;top:389px;width:32px;height:1px;background:#707070"></div>
<div style="left:2px;top:390px;width:31px;height:1px;background:#fff"></div>
<div class="t" style="left:2px;top:375px;width:32px;text-align:center;font-size:12.3px;color:#000">13</div>
<div style="left:2px;top:409px;width:32px;height:1px;background:#707070"></div>
<div style="left:2px;top:410px;width:31px;height:1px;background:#fff"></div>
<div class="t" style="left:2px;top:395px;width:32px;text-align:center;font-size:12.3px;color:#000">14</div>
<div style="left:2px;top:429px;width:32px;height:1px;background:#707070"></div>
<div style="left:2px;top:430px;width:31px;height:1px;background:#fff"></div>
<div class="t" style="left:2px;top:415px;width:32px;text-align:center;font-size:12.3px;color:#000">15</div>
<div style="left:2px;top:449px;width:32px;height:1px;background:#707070"></div>
<div style="left:2px;top:450px;width:31px;height:1px;background:#fff"></div>
<div class="t" style="left:2px;top:435px;width:32px;text-align:center;font-size:12.3px;color:#000">16</div>
<div style="left:2px;top:469px;width:32px;height:1px;background:#707070"></div>
<div style="left:2px;top:470px;width:31px;height:1px;background:#fff"></div>
<div class="t" style="left:2px;top:455px;width:32px;text-align:center;font-size:12.3px;color:#000">17</div>
<div style="left:2px;top:489px;width:32px;height:1px;background:#707070"></div>
<div style="left:2px;top:490px;width:31px;height:1px;background:#fff"></div>
<div class="t" style="left:2px;top:475px;width:32px;text-align:center;font-size:12.3px;color:#000">18</div>
<div style="left:2px;top:509px;width:32px;height:1px;background:#707070"></div>
<div style="left:2px;top:510px;width:31px;height:1px;background:#fff"></div>
<div class="t" style="left:2px;top:495px;width:32px;text-align:center;font-size:12.3px;color:#000">19</div>
<div style="left:2px;top:529px;width:32px;height:1px;background:#707070"></div>
<div style="left:2px;top:530px;width:31px;height:1px;background:#fff"></div>
<div class="t" style="left:2px;top:515px;width:32px;text-align:center;font-size:12.3px;color:#000">20</div>
<div style="left:2px;top:549px;width:32px;height:1px;background:#707070"></div>
<div style="left:2px;top:550px;width:31px;height:1px;background:#fff"></div>
<div class="t" style="left:2px;top:535px;width:32px;text-align:center;font-size:12.3px;color:#000">21</div>
<div style="left:2px;top:569px;width:32px;height:1px;background:#707070"></div>
<div style="left:2px;top:570px;width:31px;height:1px;background:#fff"></div>
<div class="t" style="left:2px;top:555px;width:32px;text-align:center;font-size:12.3px;color:#000">22</div>
<div style="left:2px;top:589px;width:32px;height:1px;background:#707070"></div>
<div style="left:2px;top:590px;width:31px;height:1px;background:#fff"></div>
<div class="t" style="left:2px;top:575px;width:32px;text-align:center;font-size:12.3px;color:#000">23</div>
<div style="left:2px;top:609px;width:32px;height:1px;background:#707070"></div>
<div style="left:2px;top:610px;width:31px;height:1px;background:#fff"></div>
<div class="t" style="left:2px;top:595px;width:32px;text-align:center;font-size:12.3px;color:#000">24</div>
<div style="left:2px;top:629px;width:32px;height:1px;background:#707070"></div>
<div style="left:2px;top:630px;width:31px;height:1px;background:#fff"></div>
<div class="t" style="left:2px;top:615px;width:32px;text-align:center;font-size:12.3px;color:#000">25</div>
<div style="left:2px;top:649px;width:32px;height:1px;background:#707070"></div>
<div style="left:2px;top:650px;width:31px;height:1px;background:#fff"></div>
<div class="t" style="left:2px;top:635px;width:32px;text-align:center;font-size:12.3px;color:#000">26</div>
<div style="left:2px;top:669px;width:32px;height:1px;background:#707070"></div>
<div style="left:2px;top:670px;width:31px;height:1px;background:#fff"></div>
<div class="t" style="left:2px;top:655px;width:32px;text-align:center;font-size:12.3px;color:#000">27</div>
<div style="left:2px;top:689px;width:32px;height:1px;background:#707070"></div>
<div style="left:2px;top:690px;width:31px;height:1px;background:#fff"></div>
<div class="t" style="left:2px;top:675px;width:32px;text-align:center;font-size:12.3px;color:#000">28</div>
<div style="left:2px;top:709px;width:32px;height:1px;background:#707070"></div>
<div style="left:2px;top:710px;width:31px;height:1px;background:#fff"></div>
<div class="t" style="left:2px;top:695px;width:32px;text-align:center;font-size:12.3px;color:#000">29</div>
<div style="left:2px;top:729px;width:32px;height:1px;background:#707070"></div>
<div style="left:2px;top:730px;width:31px;height:1px;background:#fff"></div>
<div class="t" style="left:2px;top:715px;width:32px;text-align:center;font-size:12.3px;color:#000">30</div>
<div style="left:2px;top:749px;width:32px;height:1px;background:#707070"></div>
<div style="left:2px;top:750px;width:31px;height:1px;background:#fff"></div>
<div class="t" style="left:2px;top:735px;width:32px;text-align:center;font-size:12.3px;color:#000">31</div>
<div style="left:2px;top:769px;width:32px;height:1px;background:#707070"></div>
<div style="left:2px;top:770px;width:31px;height:1px;background:#fff"></div>
<div class="t" style="left:2px;top:755px;width:32px;text-align:center;font-size:12.3px;color:#000">32</div>
<div style="left:2px;top:789px;width:32px;height:1px;background:#707070"></div>
<div style="left:2px;top:790px;width:31px;height:1px;background:#fff"></div>
<div class="t" style="left:2px;top:775px;width:32px;text-align:center;font-size:12.3px;color:#000">33</div>
<div style="left:2px;top:809px;width:32px;height:1px;background:#707070"></div>
<div style="left:2px;top:810px;width:31px;height:1px;background:#fff"></div>
<div class="t" style="left:2px;top:795px;width:32px;text-align:center;font-size:12.3px;color:#000">34</div>
<div style="left:2px;top:829px;width:32px;height:1px;background:#707070"></div>
<div style="left:2px;top:830px;width:31px;height:1px;background:#fff"></div>
<div class="t" style="left:2px;top:815px;width:32px;text-align:center;font-size:12.3px;color:#000">35</div>
<div class="t" style="left:54.80px;top:161px;font-size:14px;color:#ff3333;font-weight:bold;font-style:italic;transform:scaleX(0.9080);transform-origin:0 0;">Jahr:</div>
<div class="t" style="left:131.82px;top:161px;font-size:14px;color:#ff3333;font-weight:bold;font-style:italic;transform:scaleX(0.8607);transform-origin:0 0;">2017</div>
<div class="t" style="left:200.60px;top:161px;font-size:14px;color:#000;font-weight:bold;font-style:italic;transform:scaleX(0.9325);transform-origin:0 0;">Monat:</div>
<div class="t" style="left:295.51px;top:161px;font-size:14px;color:#000;font-weight:bold;font-style:italic;transform:scaleX(0.8323);transform-origin:0 0;">2</div>
<div class="t" style="left:455px;top:159px;font-size:15.9px;font-weight:bold;color:#000">Stundennachweis</div>
<div style="left:35px;top:185px;width:985px;height:1px;background:#000"></div>
<div style="left:1019px;top:185px;width:1px;height:36px;background:#000"></div>
<div class="t" style="left:480.30px;top:187px;font-size:15px;color:#0000ff;font-weight:bold;font-family:'Liberation Serif';transform:scaleX(0.9740);transform-origin:0 0;">Gesammte Stunden/Tage</div>
<div style="left:35px;top:203px;width:984px;height:17px;background:#e6e6ff"></div>
<div style="left:35px;top:202px;width:985px;height:1px;background:#000"></div>
<div style="left:35px;top:220px;width:985px;height:1px;background:#000"></div>
<div style="left:183px;top:202px;width:1px;height:19px;background:#000"></div>
<div style="left:337px;top:202px;width:1px;height:19px;background:#000"></div>
<div style="left:427px;top:202px;width:1px;height:19px;background:#000"></div>
<div style="left:517px;top:202px;width:1px;height:19px;background:#000"></div>
<div style="left:607px;top:202px;width:1px;height:19px;background:#000"></div>
<div style="left:697px;top:202px;width:1px;height:19px;background:#000"></div>
<div style="left:787px;top:202px;width:1px;height:19px;background:#000"></div>
<div style="left:877px;top:202px;width:1px;height:19px;background:#000"></div>
<div style="left:954px;top:202px;width:1px;height:19px;background:#000"></div>
<div class="t" style="left:35.90px;top:205px;font-size:14px;color:#5f9a00;transform:scaleX(0.9821);transform-origin:0 0;-webkit-text-stroke:0.35px #5f9a00">ZA Konto:</div>
<div class="t" style="left:119.80px;top:205px;font-size:14px;color:#5f9a00;transform:scaleX(0.8959);transform-origin:0 0;-webkit-text-stroke:0.35px #5f9a00">00:00</div>
<div class="t" style="left:366.15px;top:205px;font-size:14px;color:#000;font-weight:bold;transform:scaleX(0.8715);transform-origin:0 0;">00:00</div>
<div class="t" style="left:456.40px;top:205px;font-size:14px;color:#000;font-weight:bold;transform:scaleX(0.8715);transform-origin:0 0;">00:00</div>
<div class="t" style="left:546.10px;top:205px;font-size:14px;color:#000;font-weight:bold;transform:scaleX(0.8715);transform-origin:0 0;">00:00</div>
<div class="t" style="left:636.00px;top:205px;font-size:14px;color:#ff3333;font-weight:bold;transform:scaleX(0.8715);transform-origin:0 0;">00:00</div>
<div class="t" style="left:726.40px;top:205px;font-size:14px;color:#0000ff;font-weight:bold;transform:scaleX(0.8715);transform-origin:0 0;">00:00</div>
<div class="t" style="left:816.40px;top:205px;font-size:14px;color:#000;font-weight:bold;transform:scaleX(0.8715);transform-origin:0 0;">00:00</div>
<div class="t" style="left:912.30px;top:205px;font-size:14px;color:#000;font-weight:bold;transform:scaleX(0.8205);transform-origin:0 0;">0</div>
<div style="left:180px;top:203px;width:3px;height:3px;background:#e00"></div>
<div style="left:424px;top:203px;width:3px;height:3px;background:#e00"></div>
<div style="left:604px;top:203px;width:3px;height:3px;background:#e00"></div>
<div style="left:784px;top:203px;width:3px;height:3px;background:#e00"></div>
<div style="left:35px;top:232px;width:986px;height:1px;background:#000"></div>
<div style="left:1020px;top:232px;width:1px;height:40px;background:#000"></div>
<div style="left:428px;top:234px;width:90px;height:37px;background:#9999ff"></div>
<div style="left:518px;top:234px;width:90px;height:37px;background:#99ffcc"></div>
<div style="left:608px;top:234px;width:90px;height:37px;background:#cccccc"></div>
<div style="left:955px;top:234px;width:65px;height:37px;background:#ccffcc"></div>
<div style="left:35px;top:235px;width:71px;height:34px;border:1px solid #000"></div>
<div style="left:107px;top:235px;width:76px;height:34px;border:1px solid #000"></div>
<div style="left:184px;top:235px;width:76px;height:34px;border:1px solid #000"></div>
<div style="left:261px;top:235px;width:76px;height:34px;border:1px solid #000"></div>
<div style="left:338px;top:235px;width:89px;height:34px;border:1px solid #000"></div>
<div style="left:428px;top:235px;width:89px;height:34px;border:1px solid #000"></div>
<div style="left:518px;top:235px;width:89px;height:34px;border:1px solid #000"></div>
<div style="left:608px;top:235px;width:89px;height:34px;border:1px solid #000"></div>
<div style="left:698px;top:235px;width:89px;height:34px;border:1px solid #000"></div>
<div style="left:955px;top:235px;width:64px;height:34px;border:1px solid #000"></div>
<div style="left:788px;top:235px;width:166px;height:18px;border:1px solid #000"></div>
<div style="left:788px;top:255px;width:89px;height:14px;border:1px solid #000"></div>
<div style="left:878px;top:255px;width:76px;height:14px;border:1px solid #000"></div>
<div class="t" style="left:50.40px;top:238px;font-size:14px;color:#000;font-weight:bold;transform:scaleX(0.9162);transform-origin:0 0;">Datum</div>
<div class="t" style="left:116.60px;top:238px;font-size:14px;color:#000;font-weight:bold;transform:scaleX(0.9299);transform-origin:0 0;">Kommen</div>
<div class="t" style="left:202.60px;top:238px;font-size:14px;color:#000;font-weight:bold;transform:scaleX(0.9115);transform-origin:0 0;">Pause</div>
<div class="t" style="left:278.00px;top:238px;font-size:14px;color:#000;font-weight:bold;transform:scaleX(0.9483);transform-origin:0 0;">Gehen</div>
<div class="t" style="left:352.40px;top:238px;font-size:14px;color:#000;font-weight:bold;transform:scaleX(0.9228);transform-origin:0 0;">Soll/Norm</div>
<div class="t" style="left:438.40px;top:238px;font-size:14px;color:#fff;font-weight:bold;transform:scaleX(0.9417);transform-origin:0 0;">Geleistete</div>
<div class="t" style="left:522.20px;top:238px;font-size:14px;color:#000;font-weight:bold;transform:scaleX(0.9184);transform-origin:0 0;">Überstunden</div>
<div class="t" style="left:613.10px;top:238px;font-size:14px;color:#ff3333;font-weight:bold;transform:scaleX(0.9303);transform-origin:0 0;">Fehlstunden</div>
<div class="t" style="left:714.60px;top:238px;font-size:14px;color:#0000ff;font-weight:bold;transform:scaleX(0.9597);transform-origin:0 0;">Gezahlte</div>
<div class="t" style="left:852.30px;top:238px;font-size:14px;color:#000;font-weight:bold;transform:scaleX(0.9245);transform-origin:0 0;">Urlaub</div>
<div class="t" style="left:968.60px;top:238px;font-size:14px;color:#ff3333;font-weight:bold;transform:scaleX(0.8692);transform-origin:0 0;">Status</div>
<div class="t" style="left:373.70px;top:254px;font-size:14px;color:#000;font-weight:bold;transform:scaleX(0.8470);transform-origin:0 0;">Std</div>
<div class="t" style="left:463.70px;top:254px;font-size:14px;color:#fff;font-weight:bold;transform:scaleX(0.8248);transform-origin:0 0;">Std</div>
<div class="t" style="left:703.00px;top:254px;font-size:14px;color:#0000ff;font-weight:bold;transform:scaleX(0.9091);transform-origin:0 0;">Überstunden</div>
<div class="t" style="left:823.40px;top:254px;font-size:14px;color:#000;font-weight:bold;transform:scaleX(0.8293);transform-origin:0 0;">Std</div>
<div class="t" style="left:905.00px;top:254px;font-size:14px;color:#000;font-weight:bold;transform:scaleX(0.9476);transform-origin:0 0;">Tag</div>
<div style="left:428px;top:272px;width:90px;height:548px;background:#9999ff"></div>
<div style="left:518px;top:272px;width:90px;height:548px;background:#99ffcc"></div>
<div style="left:608px;top:272px;width:90px;height:548px;background:#cccccc"></div>
<div style="left:955px;top:272px;width:65px;height:548px;background:#ccffcc"></div>
<div style="left:35px;top:271px;width:986px;height:1px;background:#000"></div>
<div style="left:35px;top:289px;width:985px;height:1px;background:#000"></div>
<div style="left:35px;top:309px;width:985px;height:1px;background:#000"></div>
<div style="left:35px;top:329px;width:985px;height:1px;background:#000"></div>
<div style="left:35px;top:349px;width:985px;height:1px;background:#000"></div>
<div style="left:35px;top:369px;width:985px;height:1px;background:#000"></div>
<div style="left:35px;top:389px;width:985px;height:1px;background:#000"></div>
<div style="left:35px;top:409px;width:985px;height:1px;background:#000"></div>
<div style="left:35px;top:429px;width:985px;height:1px;background:#000"></div>
<div style="left:35px;top:449px;width:985px;height:1px;background:#000"></div>
<div style="left:35px;top:469px;width:985px;height:1px;background:#000"></div>
<div style="left:35px;top:489px;width:985px;height:1px;background:#000"></div>
<div style="left:35px;top:509px;width:985px;height:1px;background:#000"></div>
<div style="left:35px;top:529px;width:985px;height:1px;background:#000"></div>
<div style="left:35px;top:549px;width:985px;height:1px;background:#000"></div>
<div style="left:35px;top:569px;width:985px;height:1px;background:#000"></div>
<div style="left:35px;top:589px;width:985px;height:1px;background:#000"></div>
<div style="left:35px;top:609px;width:985px;height:1px;background:#000"></div>
<div style="left:35px;top:629px;width:985px;height:1px;background:#000"></div>
<div style="left:35px;top:649px;width:985px;height:1px;background:#000"></div>
<div style="left:35px;top:669px;width:985px;height:1px;background:#000"></div>
<div style="left:35px;top:689px;width:985px;height:1px;background:#000"></div>
<div style="left:35px;top:709px;width:985px;height:1px;background:#000"></div>
<div style="left:35px;top:729px;width:985px;height:1px;background:#000"></div>
<div style="left:35px;top:749px;width:985px;height:1px;background:#000"></div>
<div style="left:35px;top:769px;width:985px;height:1px;background:#000"></div>
<div style="left:35px;top:789px;width:985px;height:1px;background:#000"></div>
<div style="left:35px;top:809px;width:985px;height:1px;background:#000"></div>
<div style="left:35px;top:829px;width:985px;height:1px;background:#000"></div>
<div style="left:35px;top:271px;width:1px;height:549px;background:#000"></div>
<div style="left:106px;top:271px;width:1px;height:549px;background:#000"></div>
<div style="left:183px;top:271px;width:1px;height:549px;background:#000"></div>
<div style="left:260px;top:271px;width:1px;height:549px;background:#000"></div>
<div style="left:337px;top:271px;width:1px;height:549px;background:#000"></div>
<div style="left:427px;top:271px;width:1px;height:549px;background:#000"></div>
<div style="left:517px;top:271px;width:1px;height:549px;background:#000"></div>
<div style="left:607px;top:271px;width:1px;height:549px;background:#000"></div>
<div style="left:697px;top:271px;width:1px;height:549px;background:#000"></div>
<div style="left:787px;top:271px;width:1px;height:549px;background:#000"></div>
<div style="left:877px;top:271px;width:1px;height:549px;background:#000"></div>
<div style="left:954px;top:271px;width:1px;height:549px;background:#000"></div>
<div style="left:1019px;top:271px;width:1px;height:549px;background:#000"></div>
<div class="t" style="left:54.20px;top:274px;font-size:14px;color:#000;font-weight:bold;transform:scaleX(0.9044);transform-origin:0 0;">01.02</div>
<div class="t" style="left:456.30px;top:274px;font-size:14px;color:#fff;font-weight:bold;transform:scaleX(0.8827);transform-origin:0 0;">00:00</div>
<div class="t" style="left:546.10px;top:274px;font-size:14px;color:#000;font-weight:bold;transform:scaleX(0.8715);transform-origin:0 0;">00:00</div>
<div class="t" style="left:635.90px;top:274px;font-size:14px;color:#ff3333;font-weight:bold;transform:scaleX(0.8771);transform-origin:0 0;">00:00</div>
<div class="t" style="left:49.10px;top:294px;font-size:14px;color:#000;font-weight:bold;transform:scaleX(0.8850);transform-origin:0 0;">Err:504</div>
<div class="t" style="left:456.30px;top:294px;font-size:14px;color:#fff;font-weight:bold;transform:scaleX(0.8827);transform-origin:0 0;">00:00</div>
<div class="t" style="left:546.10px;top:294px;font-size:14px;color:#000;font-weight:bold;transform:scaleX(0.8715);transform-origin:0 0;">00:00</div>
<div class="t" style="left:635.90px;top:294px;font-size:14px;color:#ff3333;font-weight:bold;transform:scaleX(0.8771);transform-origin:0 0;">00:00</div>
<div class="t" style="left:49.10px;top:314px;font-size:14px;color:#000;font-weight:bold;transform:scaleX(0.8850);transform-origin:0 0;">Err:504</div>
<div class="t" style="left:456.30px;top:314px;font-size:14px;color:#fff;font-weight:bold;transform:scaleX(0.8827);transform-origin:0 0;">00:00</div>
<div class="t" style="left:546.10px;top:314px;font-size:14px;color:#000;font-weight:bold;transform:scaleX(0.8715);transform-origin:0 0;">00:00</div>
<div class="t" style="left:635.90px;top:314px;font-size:14px;color:#ff3333;font-weight:bold;transform:scaleX(0.8771);transform-origin:0 0;">00:00</div>
<div class="t" style="left:49.10px;top:334px;font-size:14px;color:#000;font-weight:bold;transform:scaleX(0.8850);transform-origin:0 0;">Err:504</div>
<div class="t" style="left:456.30px;top:334px;font-size:14px;color:#fff;font-weight:bold;transform:scaleX(0.8827);transform-origin:0 0;">00:00</div>
<div class="t" style="left:546.10px;top:334px;font-size:14px;color:#000;font-weight:bold;transform:scaleX(0.8715);transform-origin:0 0;">00:00</div>
<div class="t" style="left:635.90px;top:334px;font-size:14px;color:#ff3333;font-weight:bold;transform:scaleX(0.8771);transform-origin:0 0;">00:00</div>
<div class="t" style="left:49.10px;top:354px;font-size:14px;color:#000;font-weight:bold;transform:scaleX(0.8850);transform-origin:0 0;">Err:504</div>
<div class="t" style="left:456.30px;top:354px;font-size:14px;color:#fff;font-weight:bold;transform:scaleX(0.8827);transform-origin:0 0;">00:00</div>
<div class="t" style="left:546.10px;top:354px;font-size:14px;color:#000;font-weight:bold;transform:scaleX(0.8715);transform-origin:0 0;">00:00</div>
<div class="t" style="left:635.90px;top:354px;font-size:14px;color:#ff3333;font-weight:bold;transform:scaleX(0.8771);transform-origin:0 0;">00:00</div>
<div class="t" style="left:49.10px;top:374px;font-size:14px;color:#000;font-weight:bold;transform:scaleX(0.8850);transform-origin:0 0;">Err:504</div>
<div class="t" style="left:456.30px;top:374px;font-size:14px;color:#fff;font-weight:bold;transform:scaleX(0.8827);transform-origin:0 0;">00:00</div>
<div class="t" style="left:546.10px;top:374px;font-size:14px;color:#000;font-weight:bold;transform:scaleX(0.8715);transform-origin:0 0;">00:00</div>
<div class="t" style="left:635.90px;top:374px;font-size:14px;color:#ff3333;font-weight:bold;transform:scaleX(0.8771);transform-origin:0 0;">00:00</div>
<div class="t" style="left:49.10px;top:394px;font-size:14px;color:#000;font-weight:bold;transform:scaleX(0.8850);transform-origin:0 0;">Err:504</div>
<div class="t" style="left:456.30px;top:394px;font-size:14px;color:#fff;font-weight:bold;transform:scaleX(0.8827);transform-origin:0 0;">00:00</div>
<div class="t" style="left:546.10px;top:394px;font-size:14px;color:#000;font-weight:bold;transform:scaleX(0.8715);transform-origin:0 0;">00:00</div>
<div class="t" style="left:635.90px;top:394px;font-size:14px;color:#ff3333;font-weight:bold;transform:scaleX(0.8771);transform-origin:0 0;">00:00</div>
<div class="t" style="left:49.10px;top:414px;font-size:14px;color:#000;font-weight:bold;transform:scaleX(0.8850);transform-origin:0 0;">Err:504</div>
<div class="t" style="left:456.30px;top:414px;font-size:14px;color:#fff;font-weight:bold;transform:scaleX(0.8827);transform-origin:0 0;">00:00</div>
<div class="t" style="left:546.10px;top:414px;font-size:14px;color:#000;font-weight:bold;transform:scaleX(0.8715);transform-origin:0 0;">00:00</div>
<div class="t" style="left:635.90px;top:414px;font-size:14px;color:#ff3333;font-weight:bold;transform:scaleX(0.8771);transform-origin:0 0;">00:00</div>
<div class="t" style="left:49.10px;top:434px;font-size:14px;color:#000;font-weight:bold;transform:scaleX(0.8850);transform-origin:0 0;">Err:504</div>
<div class="t" style="left:456.30px;top:434px;font-size:14px;color:#fff;font-weight:bold;transform:scaleX(0.8827);transform-origin:0 0;">00:00</div>
<div class="t" style="left:546.10px;top:434px;font-size:14px;color:#000;font-weight:bold;transform:scaleX(0.8715);transform-origin:0 0;">00:00</div>
<div class="t" style="left:635.90px;top:434px;font-size:14px;color:#ff3333;font-weight:bold;transform:scaleX(0.8771);transform-origin:0 0;">00:00</div>
<div class="t" style="left:49.10px;top:454px;font-size:14px;color:#000;font-weight:bold;transform:scaleX(0.8850);transform-origin:0 0;">Err:504</div>
<div class="t" style="left:456.30px;top:454px;font-size:14px;color:#fff;font-weight:bold;transform:scaleX(0.8827);transform-origin:0 0;">00:00</div>
<div class="t" style="left:546.10px;top:454px;font-size:14px;color:#000;font-weight:bold;transform:scaleX(0.8715);transform-origin:0 0;">00:00</div>
<div class="t" style="left:635.90px;top:454px;font-size:14px;color:#ff3333;font-weight:bold;transform:scaleX(0.8771);transform-origin:0 0;">00:00</div>
<div class="t" style="left:49.10px;top:474px;font-size:14px;color:#000;font-weight:bold;transform:scaleX(0.8850);transform-origin:0 0;">Err:504</div>
<div class="t" style="left:456.30px;top:474px;font-size:14px;color:#fff;font-weight:bold;transform:scaleX(0.8827);transform-origin:0 0;">00:00</div>
<div class="t" style="left:546.10px;top:474px;font-size:14px;color:#000;font-weight:bold;transform:scaleX(0.8715);transform-origin:0 0;">00:00</div>
<div class="t" style="left:635.90px;top:474px;font-size:14px;color:#ff3333;font-weight:bold;transform:scaleX(0.8771);transform-origin:0 0;">00:00</div>
<div class="t" style="left:49.10px;top:494px;font-size:14px;color:#000;font-weight:bold;transform:scaleX(0.8850);transform-origin:0 0;">Err:504</div>
<div class="t" style="left:456.30px;top:494px;font-size:14px;color:#fff;font-weight:bold;transform:scaleX(0.8827);transform-origin:0 0;">00:00</div>
<div class="t" style="left:546.10px;top:494px;font-size:14px;color:#000;font-weight:bold;transform:scaleX(0.8715);transform-origin:0 0;">00:00</div>
<div class="t" style="left:635.90px;top:494px;font-size:14px;color:#ff3333;font-weight:bold;transform:scaleX(0.8771);transform-origin:0 0;">00:00</div>
<div class="t" style="left:49.10px;top:514px;font-size:14px;color:#000;font-weight:bold;transform:scaleX(0.8850);transform-origin:0 0;">Err:504</div>
<div class="t" style="left:456.30px;top:514px;font-size:14px;color:#fff;font-weight:bold;transform:scaleX(0.8827);transform-origin:0 0;">00:00</div>
<div class="t" style="left:546.10px;top:514px;font-size:14px;color:#000;font-weight:bold;transform:scaleX(0.8715);transform-origin:0 0;">00:00</div>
<div class="t" style="left:635.90px;top:514px;font-size:14px;color:#ff3333;font-weight:bold;transform:scaleX(0.8771);transform-origin:0 0;">00:00</div>
<div class="t" style="left:49.10px;top:534px;font-size:14px;color:#000;font-weight:bold;transform:scaleX(0.8850);transform-origin:0 0;">Err:504</div>
<div class="t" style="left:456.30px;top:534px;font-size:14px;color:#fff;font-weight:bold;transform:scaleX(0.8827);transform-origin:0 0;">00:00</div>
<div class="t" style="left:546.10px;top:534px;font-size:14px;color:#000;font-weight:bold;transform:scaleX(0.8715);transform-origin:0 0;">00:00</div>
<div class="t" style="left:635.90px;top:534px;font-size:14px;color:#ff3333;font-weight:bold;transform:scaleX(0.8771);transform-origin:0 0;">00:00</div>
<div class="t" style="left:49.10px;top:554px;font-size:14px;color:#000;font-weight:bold;transform:scaleX(0.8850);transform-origin:0 0;">Err:504</div>
<div class="t" style="left:456.30px;top:554px;font-size:14px;color:#fff;font-weight:bold;transform:scaleX(0.8827);transform-origin:0 0;">00:00</div>
<div class="t" style="left:546.10px;top:554px;font-size:14px;color:#000;font-weight:bold;transform:scaleX(0.8715);transform-origin:0 0;">00:00</div>
<div class="t" style="left:635.90px;top:554px;font-size:14px;color:#ff3333;font-weight:bold;transform:scaleX(0.8771);transform-origin:0 0;">00:00</div>
<div class="t" style="left:49.10px;top:574px;font-size:14px;color:#000;font-weight:bold;transform:scaleX(0.8850);transform-origin:0 0;">Err:504</div>
<div class="t" style="left:456.30px;top:574px;font-size:14px;color:#fff;font-weight:bold;transform:scaleX(0.8827);transform-origin:0 0;">00:00</div>
<div class="t" style="left:546.10px;top:574px;font-size:14px;color:#000;font-weight:bold;transform:scaleX(0.8715);transform-origin:0 0;">00:00</div>
<div class="t" style="left:635.90px;top:574px;font-size:14px;color:#ff3333;font-weight:bold;transform:scaleX(0.8771);transform-origin:0 0;">00:00</div>
<div class="t" style="left:49.10px;top:594px;font-size:14px;color:#000;font-weight:bold;transform:scaleX(0.8850);transform-origin:0 0;">Err:504</div>
<div class="t" style="left:456.30px;top:594px;font-size:14px;color:#fff;font-weight:bold;transform:scaleX(0.8827);transform-origin:0 0;">00:00</div>
<div class="t" style="left:546.10px;top:594px;font-size:14px;color:#000;font-weight:bold;transform:scaleX(0.8715);transform-origin:0 0;">00:00</div>
<div class="t" style="left:635.90px;top:594px;font-size:14px;color:#ff3333;font-weight:bold;transform:scaleX(0.8771);transform-origin:0 0;">00:00</div>
<div class="t" style="left:49.10px;top:614px;font-size:14px;color:#000;font-weight:bold;transform:scaleX(0.8850);transform-origin:0 0;">Err:504</div>
<div class="t" style="left:456.30px;top:614px;font-size:14px;color:#fff;font-weight:bold;transform:scaleX(0.8827);transform-origin:0 0;">00:00</div>
<div class="t" style="left:546.10px;top:614px;font-size:14px;color:#000;font-weight:bold;transform:scaleX(0.8715);transform-origin:0 0;">00:00</div>
<div class="t" style="left:635.90px;top:614px;font-size:14px;color:#ff3333;font-weight:bold;transform:scaleX(0.8771);transform-origin:0 0;">00:00</div>
<div class="t" style="left:49.10px;top:634px;font-size:14px;color:#000;font-weight:bold;transform:scaleX(0.8850);transform-origin:0 0;">Err:504</div>
<div class="t" style="left:456.30px;top:634px;font-size:14px;color:#fff;font-weight:bold;transform:scaleX(0.8827);transform-origin:0 0;">00:00</div>
<div class="t" style="left:546.10px;top:634px;font-size:14px;color:#000;font-weight:bold;transform:scaleX(0.8715);transform-origin:0 0;">00:00</div>
<div class="t" style="left:635.90px;top:634px;font-size:14px;color:#ff3333;font-weight:bold;transform:scaleX(0.8771);transform-origin:0 0;">00:00</div>
<div class="t" style="left:49.10px;top:654px;font-size:14px;color:#000;font-weight:bold;transform:scaleX(0.8850);transform-origin:0 0;">Err:504</div>
<div class="t" style="left:456.30px;top:654px;font-size:14px;color:#fff;font-weight:bold;transform:scaleX(0.8827);transform-origin:0 0;">00:00</div>
<div class="t" style="left:546.10px;top:654px;font-size:14px;color:#000;font-weight:bold;transform:scaleX(0.8715);transform-origin:0 0;">00:00</div>
<div class="t" style="left:635.90px;top:654px;font-size:14px;color:#ff3333;font-weight:bold;transform:scaleX(0.8771);transform-origin:0 0;">00:00</div>
<div class="t" style="left:49.10px;top:674px;font-size:14px;color:#000;font-weight:bold;transform:scaleX(0.8850);transform-origin:0 0;">Err:504</div>
<div class="t" style="left:456.30px;top:674px;font-size:14px;color:#fff;font-weight:bold;transform:scaleX(0.8827);transform-origin:0 0;">00:00</div>
<div class="t" style="left:546.10px;top:674px;font-size:14px;color:#000;font-weight:bold;transform:scaleX(0.8715);transform-origin:0 0;">00:00</div>
<div class="t" style="left:635.90px;top:674px;font-size:14px;color:#ff3333;font-weight:bold;transform:scaleX(0.8771);transform-origin:0 0;">00:00</div>
<div class="t" style="left:49.10px;top:694px;font-size:14px;color:#000;font-weight:bold;transform:scaleX(0.8850);transform-origin:0 0;">Err:504</div>
<div class="t" style="left:456.30px;top:694px;font-size:14px;color:#fff;font-weight:bold;transform:scaleX(0.8827);transform-origin:0 0;">00:00</div>
<div class="t" style="left:546.10px;top:694px;font-size:14px;color:#000;font-weight:bold;transform:scaleX(0.8715);transform-origin:0 0;">00:00</div>
<div class="t" style="left:635.90px;top:694px;font-size:14px;color:#ff3333;font-weight:bold;transform:scaleX(0.8771);transform-origin:0 0;">00:00</div>
<div class="t" style="left:49.10px;top:714px;font-size:14px;color:#000;font-weight:bold;transform:scaleX(0.8850);transform-origin:0 0;">Err:504</div>
<div class="t" style="left:456.30px;top:714px;font-size:14px;color:#fff;font-weight:bold;transform:scaleX(0.8827);transform-origin:0 0;">00:00</div>
<div class="t" style="left:546.10px;top:714px;font-size:14px;color:#000;font-weight:bold;transform:scaleX(0.8715);transform-origin:0 0;">00:00</div>
<div class="t" style="left:635.90px;top:714px;font-size:14px;color:#ff3333;font-weight:bold;transform:scaleX(0.8771);transform-origin:0 0;">00:00</div>
<div class="t" style="left:49.10px;top:734px;font-size:14px;color:#000;font-weight:bold;transform:scaleX(0.8850);transform-origin:0 0;">Err:504</div>
<div class="t" style="left:456.30px;top:734px;font-size:14px;color:#fff;font-weight:bold;transform:scaleX(0.8827);transform-origin:0 0;">00:00</div>
<div class="t" style="left:546.10px;top:734px;font-size:14px;color:#000;font-weight:bold;transform:scaleX(0.8715);transform-origin:0 0;">00:00</div>
<div class="t" style="left:635.90px;top:734px;font-size:14px;color:#ff3333;font-weight:bold;transform:scaleX(0.8771);transform-origin:0 0;">00:00</div>
<div class="t" style="left:49.10px;top:754px;font-size:14px;color:#000;font-weight:bold;transform:scaleX(0.8850);transform-origin:0 0;">Err:504</div>
<div class="t" style="left:456.30px;top:754px;font-size:14px;color:#fff;font-weight:bold;transform:scaleX(0.8827);transform-origin:0 0;">00:00</div>
<div class="t" style="left:546.10px;top:754px;font-size:14px;color:#000;font-weight:bold;transform:scaleX(0.8715);transform-origin:0 0;">00:00</div>
<div class="t" style="left:635.90px;top:754px;font-size:14px;color:#ff3333;font-weight:bold;transform:scaleX(0.8771);transform-origin:0 0;">00:00</div>
<div class="t" style="left:49.10px;top:774px;font-size:14px;color:#000;font-weight:bold;transform:scaleX(0.8850);transform-origin:0 0;">Err:504</div>
<div class="t" style="left:456.30px;top:774px;font-size:14px;color:#fff;font-weight:bold;transform:scaleX(0.8827);transform-origin:0 0;">00:00</div>
<div class="t" style="left:546.10px;top:774px;font-size:14px;color:#000;font-weight:bold;transform:scaleX(0.8715);transform-origin:0 0;">00:00</div>
<div class="t" style="left:635.90px;top:774px;font-size:14px;color:#ff3333;font-weight:bold;transform:scaleX(0.8771);transform-origin:0 0;">00:00</div>
<div class="t" style="left:49.10px;top:794px;font-size:14px;color:#000;font-weight:bold;transform:scaleX(0.8850);transform-origin:0 0;">Err:504</div>
<div class="t" style="left:456.30px;top:794px;font-size:14px;color:#fff;font-weight:bold;transform:scaleX(0.8827);transform-origin:0 0;">00:00</div>
<div class="t" style="left:546.10px;top:794px;font-size:14px;color:#000;font-weight:bold;transform:scaleX(0.8715);transform-origin:0 0;">00:00</div>
<div class="t" style="left:635.90px;top:794px;font-size:14px;color:#ff3333;font-weight:bold;transform:scaleX(0.8771);transform-origin:0 0;">00:00</div>
<div class="t" style="left:49.10px;top:814px;font-size:14px;color:#000;font-weight:bold;transform:scaleX(0.8850);transform-origin:0 0;">Err:504</div>
<div class="t" style="left:456.30px;top:814px;font-size:14px;color:#fff;font-weight:bold;transform:scaleX(0.8827);transform-origin:0 0;">00:00</div>
<div class="t" style="left:546.10px;top:814px;font-size:14px;color:#000;font-weight:bold;transform:scaleX(0.8715);transform-origin:0 0;">00:00</div>
<div class="t" style="left:635.90px;top:814px;font-size:14px;color:#ff3333;font-weight:bold;transform:scaleX(0.8771);transform-origin:0 0;">00:00</div>
<div style="left:35px;top:268px;width:72px;height:3px;background:#000"></div>
<div style="left:35px;top:288px;width:72px;height:3px;background:#000"></div>
<div style="left:105px;top:268px;width:3px;height:23px;background:#000"></div>
<div style="left:105px;top:288px;width:6px;height:6px;background:#000"></div>
<div style="left:42px;top:141px;width:281px;height:54px;border:5px solid #ed1c24"></div>
<div style="left:28px;top:252px;width:91px;height:52px;border:5px solid #ed1c24"></div>
<div style="left:1192px;top:140px;width:18px;height:697px;background:#f0f0f0"></div>
<div style="left:1192px;top:140px;width:17px;height:3px;background:#000"></div>
<svg style="left:1196px;top:149px;" width="10" height="6" viewBox="0 0 10 6"><path d="M1.2 5L5 1.3 8.8 5" fill="none" stroke="#505050" stroke-width="2"/></svg>
<div style="left:1193px;top:160px;width:15px;height:303px;background:#c8c8c8"></div>
<svg style="left:1196px;top:808px;" width="10" height="6" viewBox="0 0 10 6"><path d="M1 1L5 5 9 1" fill="none" stroke="#606060" stroke-width="1.6"/></svg>
<div style="left:0px;top:820px;width:1192px;height:17px;background:#f0f0f0"></div>
<div style="left:0px;top:820px;width:2px;height:17px;background:#8c8c8c"></div>
<div style="left:236px;top:820px;width:916px;height:1px;background:#707070"></div>
<div style="left:3px;top:821px;width:15px;height:15px;background:#cccccc"></div>
<div style="left:20px;top:821px;width:15px;height:15px;background:#cccccc"></div>
<div style="left:37px;top:821px;width:15px;height:15px;background:#cccccc"></div>
<div style="left:54px;top:821px;width:15px;height:15px;background:#cccccc"></div>
<svg style="left:3px;top:821px;" width="15" height="15" viewBox="0 0 15 15"><path d="M10.5 4v7.5L6.5 7.7z" fill="#a8a8a8"/><path d="M4.5 4v7.5" stroke="#a8a8a8" stroke-width="1.2"/><path d="M5.5 4.5v7M10.5 8v4" stroke="#fff" stroke-width="0.9"/></svg>
<svg style="left:20px;top:821px;" width="15" height="15" viewBox="0 0 15 15"><path d="M9.5 4v7.5L5.5 7.7z" fill="#a8a8a8"/><path d="M9.5 5v7" stroke="#fff" stroke-width="0.9"/></svg>
<svg style="left:37px;top:821px;" width="15" height="15" viewBox="0 0 15 15"><path d="M5.5 4v7.5L9.5 7.7z" fill="#a8a8a8"/><path d="M6 12l3.5-3.5" stroke="#fff" stroke-width="0.9"/></svg>
<svg style="left:54px;top:821px;" width="15" height="15" viewBox="0 0 15 15"><path d="M4.5 4v7.5L8.5 7.7z" fill="#a8a8a8"/><path d="M11 4v7.5" stroke="#a8a8a8" stroke-width="1.2"/><path d="M5 12l3.5-3.5M10 4.5v7" stroke="#fff" stroke-width="0.9"/></svg>
<svg style="left:66px;top:819px;" width="175" height="20" viewBox="0 0 175 20"><path d="M65.2 2.5H169.3L162.5 17.5H61.3z" fill="#f0f0f0" stroke="#7a7a7a"/><path d="M2.8 1L11.2 17.5H58.5L65.2 1" fill="#fff" stroke="#6a6a6a"/><path d="M3 1.5H65" stroke="#fff"/></svg>
<div class="t" style="left:79.50px;top:823px;font-size:12.7px;color:#000;font-weight:bold;transform:scaleX(0.9244);transform-origin:0 0;">Vorlage</div>
<div class="t" style="left:134.00px;top:823px;font-size:12.7px;color:#000;transform:scaleX(0.9255);transform-origin:0 0;">Jahres Auflistung</div>
<div style="left:1152px;top:821px;width:7px;height:16px;background:#fff;border:1px solid #9a9a9a;border-top:none"></div>
<svg style="left:1163px;top:824px;" width="8" height="10" viewBox="0 0 8 10"><path d="M6 1L2 5 6 9" fill="none" stroke="#505050" stroke-width="1.6"/></svg>
<svg style="left:1177px;top:824px;" width="8" height="10" viewBox="0 0 8 10"><path d="M2 1L6 5 2 9" fill="none" stroke="#505050" stroke-width="1.6"/></svg>
<div style="left:1189px;top:820px;width:3px;height:17px;background:#000"></div>
<div style="left:1152px;top:837px;width:58px;height:1px;background:#e0e0e0"></div>
<div style="left:0px;top:838px;width:1600px;height:22px;background:#f0f0f0"></div>
<div class="t" style="left:10.60px;top:845px;font-size:12.7px;color:#000;transform:scaleX(0.9219);transform-origin:0 0;">Tabelle 1 / 2</div>
<div style="left:368px;top:842px;width:1px;height:16px;background:#a0a0a0"></div>
<div style="left:820px;top:842px;width:1px;height:16px;background:#a0a0a0"></div>
<div style="left:874px;top:842px;width:1px;height:16px;background:#a0a0a0"></div>
<div style="left:908px;top:842px;width:1px;height:16px;background:#a0a0a0"></div>
<div style="left:924px;top:842px;width:1px;height:16px;background:#a0a0a0"></div>
<div style="left:953px;top:842px;width:1px;height:16px;background:#a0a0a0"></div>
<div style="left:1401px;top:842px;width:1px;height:16px;background:#a0a0a0"></div>
<div style="left:1554px;top:842px;width:1px;height:16px;background:#a0a0a0"></div>
<div class="t" style="left:374.20px;top:845px;font-size:12.7px;color:#000;transform:scaleX(0.8857);transform-origin:0 0;">PageStyle_Vorlage</div>
<div class="t" style="left:879.30px;top:845px;font-size:12.7px;color:#000;transform:scaleX(0.7835);transform-origin:0 0;">STD</div>
<div class="t" style="left:912px;top:845px;font-size:12.7px;color:#000">*</div>
<div class="t" style="left:1138.40px;top:845px;font-size:12.7px;color:#000;transform:scaleX(0.9078);transform-origin:0 0;">Summe=01.02</div>
<svg style="left:1406px;top:844px;" width="13" height="13" viewBox="0 0 13 13"><circle cx="6.5" cy="6.5" r="5.5" fill="#d4e4f4" stroke="#4a5a6a"/><path d="M3.5 6.5h6" stroke="#2a3a5a" stroke-width="1.5"/></svg>
<div style="left:1423px;top:849px;width:107px;height:1px;background:#7a7a7a"></div>
<svg style="left:1470px;top:844px;" width="11" height="12" viewBox="0 0 11 12"><circle cx="5.5" cy="6.5" r="4" fill="#6a8ab0" stroke="#3a4a6a"/></svg>
<svg style="left:1534px;top:844px;" width="13" height="13" viewBox="0 0 13 13"><circle cx="6.5" cy="6.5" r="5.5" fill="#d4e4f4" stroke="#4a5a6a"/><path d="M3.5 6.5h6M6.5 3.5v6" stroke="#2a3a5a" stroke-width="1.5"/></svg>
<div class="t" style="left:1559.60px;top:845px;font-size:12.7px;color:#000;transform:scaleX(0.8444);transform-origin:0 0;">100 %</div>
<div style="left:1210px;top:105px;width:390px;height:733px;background:#f0f0f0"></div>
<div style="left:1210px;top:139px;width:1px;height:698px;background:#fff"></div>
<div style="left:1209px;top:105px;width:1px;height:34px;background:#a8a8a8"></div>
<div style="left:1216px;top:105px;width:1px;height:733px;background:#9a9a9a"></div>
<div style="left:1217px;top:105px;width:383px;height:1px;background:#a0a0a0"></div>
<div style="left:1598px;top:105px;width:1px;height:733px;background:#a0a0a0"></div>
<div style="left:1210px;top:837px;width:389px;height:1px;background:#a0a0a0"></div>
<svg style="left:1212px;top:451px;" width="6" height="38" viewBox="0 0 6 38"><path d="M0.5 0.5l4 3-4 3z M0.5 31.5l4 3-4 3z" fill="#555"/><path d="M0.5 10.5h2" stroke="#666"/><path d="M0.5 13.8h2" stroke="#666"/><path d="M0.5 17.1h2" stroke="#666"/><path d="M0.5 20.4h2" stroke="#666"/><path d="M0.5 23.7h2" stroke="#666"/><path d="M0.5 27.0h2" stroke="#666"/></svg>
<div style="left:1220px;top:109px;width:340px;height:726px;background:#f0f0f0;border:1px solid #e0e0e0"></div>
<div style="left:1221px;top:110px;width:338px;height:26px;background:#f0f0f0"></div>
<div class="t" style="left:1231.60px;top:118px;font-size:13.2px;color:#000;font-weight:bold;transform:scaleX(0.9401);transform-origin:0 0;">Eigenschaften</div>
<svg style="left:1546px;top:116px;" width="9" height="9" viewBox="0 0 9 9"><path d="M1 1L8 8M8 1L1 8" stroke="#3a3f45" stroke-width="1.8"/></svg>
<svg style="left:1574px;top:120px;" width="12" height="12" viewBox="0 0 12 12"><path d="M1 2h8M1 4.5h8M1 7h8" stroke="#222" stroke-width="1.1"/><path d="M5 8.5h6l-3 3z" fill="#222"/></svg>
<div style="left:1569px;top:144px;width:23px;height:1px;background:#d8d8d8"></div>
<div style="left:1564px;top:148px;width:32px;height:32px;background:#f0f0f0;border:1.5px solid #a8a8a8;border-radius:5px"></div>
<svg style="left:1569px;top:151px;" width="22" height="24" viewBox="0 0 22 24"><ellipse cx="11" cy="21.5" rx="8.5" ry="1.8" fill="#c4c4c4"/><path d="M11 1L20.5 5.8 11 10.6 1.5 5.8z" fill="#2fb0ee"/><path d="M11 1L20.5 5.8 15.8 8.2 6.3 3.4z" fill="#3cc8f5"/><path d="M15.8 8.2L20.5 5.8 11 1 11 5.5z" fill="#79d62a"/><path d="M1.5 5.8L11 10.6V20.5L1.5 15.7z" fill="#1f94ea"/><path d="M6.2 13.1L11 15.5V20.5L6.2 18.1z" fill="#7ad12a"/><path d="M11 10.6L20.5 5.8V15.7L11 20.5z" fill="#6cc420"/><path d="M6.3 3.4L15.8 8.2M15.8 3.4L6.3 8.2M1.5 10.8L11 15.5 20.5 10.8M6.2 8.2V18.1M15.8 8.2V18.1" fill="none" stroke="#fff" stroke-width="0.9"/></svg>
<svg style="left:1567px;top:186px;" width="26" height="26" viewBox="0 0 26 26"><ellipse cx="13" cy="23" rx="9" ry="1.5" fill="#cfcfcf"/><path d="M4 6c1-3 5-3 6-1 1 1 0 3-1 4" fill="none" stroke="#d0650a" stroke-width="2.6"/><path d="M6 21L11 8c3-2 8 0 9 4-2 1-4 2-6 4z" fill="#1f7fd0"/><path d="M11 8c3-2 8 0 9 4-2 0-4-1-5-2-1 0-3 0-4-2z" fill="#0d2a4a"/><path d="M14 14c3-1 6 1 6 4 0 2-2 3-4 3 1-2 0-5-2-7z" fill="#6ab42a"/><polygon points="12.00,0.90 12.76,2.45 14.47,2.70 13.24,3.90 13.53,5.60 12.00,4.80 10.47,5.60 10.76,3.90 9.53,2.70 11.24,2.45" fill="#c070e0"/><polygon points="19.50,1.80 20.44,3.71 22.54,4.01 21.02,5.49 21.38,7.59 19.50,6.60 17.62,7.59 17.98,5.49 16.46,4.01 18.56,3.71" fill="#f5c542"/><polygon points="3.50,8.60 4.21,10.03 5.78,10.26 4.64,11.37 4.91,12.94 3.50,12.20 2.09,12.94 2.36,11.37 1.22,10.26 2.79,10.03" fill="#f060a0"/><polygon points="21.00,9.60 21.71,11.03 23.28,11.26 22.14,12.37 22.41,13.94 21.00,13.20 19.59,13.94 19.86,12.37 18.72,11.26 20.29,11.03" fill="#f04060"/></svg>
<svg style="left:1567px;top:221px;" width="26" height="24" viewBox="0 0 26 24"><ellipse cx="14" cy="22" rx="9" ry="1.5" fill="#d0d0d0"/><path d="M1.5 9.5L18 2 24.5 13 8 20.5z" fill="#fff" stroke="#b8b8b8" stroke-width="0.8"/><path d="M4 9.8L17 4 22 12.7 9 18.5z" fill="#7ec0f0"/><path d="M6.5 15L13 12l3 5.3-6.5 2.7z" fill="#64b43a"/><path d="M7 12.5l3-3 3 1.5v3l-4 1.5z" fill="#fff" stroke="#2a5aa0" stroke-width="0.9"/><path d="M14 11l5-2.3 1 1.8-5 2.3z" fill="#8a4a2a"/><path d="M4 8.5l5-2.2" stroke="#6ac23a" stroke-width="1.5"/></svg>
<svg style="left:1568px;top:256px;" width="24" height="26" viewBox="0 0 24 26"><ellipse cx="12" cy="23.5" rx="8" ry="1.3" fill="#d4d4d4"/><circle cx="12" cy="12" r="9.6" fill="#fff" stroke="#f39c12" stroke-width="2.6"/><path d="M10.3 10.3L18.2 5.8 13.7 13.7z" fill="#e04040"/><path d="M10.3 10.3L5.8 18.2 13.7 13.7z" fill="#3a8ae0"/><circle cx="12" cy="12" r="1" fill="#fff"/><text x="9.3" y="7.3" font-size="5.5" font-family="Liberation Sans" font-weight="bold" fill="#333">N</text></svg>
<svg style="left:1568px;top:290px;" width="24" height="26" viewBox="0 0 24 26"><ellipse cx="13" cy="23.5" rx="8" ry="1.3" fill="#d4d4d4"/><path d="M7.5 1.5h9l5 5v15h-14z" fill="#dce9f8" stroke="#2a7ad0" stroke-width="1.1"/><path d="M16.5 1.5v5h5" fill="none" stroke="#2a7ad0" stroke-width="1.1"/><text x="0" y="19" font-family="Liberation Serif" font-style="italic" font-size="17" fill="#1d3a78">f</text><text x="8.5" y="19" font-family="Liberation Sans" font-size="11" fill="#1d3a78">x</text></svg>
<div style="left:1221px;top:136px;width:338px;height:27px;background:linear-gradient(#e2e2e2,#f0f0f0)"></div>
<svg style="left:1226px;top:146px;" width="9" height="9" viewBox="0 0 9 9"><rect x="0.5" y="0.5" width="8" height="8" fill="#f8f8f8" stroke="#3a4a5a"/><path d="M2 4.5h5" stroke="#222"/></svg>
<div class="t" style="left:1240.5px;top:145px;font-size:13.2px;font-weight:bold;color:#000">Text</div>
<svg style="left:1543px;top:142px;" width="12" height="11" viewBox="0 0 12 11"><rect x="0.5" y="0.5" width="11" height="10" fill="#fff" stroke="#2f5fa8"/><path d="M1 2.5h10" stroke="#8fb3e3" stroke-width="2"/><path d="M3 7.5h1.2M5.4 7.5h1.2M7.8 7.5h1.2" stroke="#1a2a4a" stroke-width="1.2"/></svg>
<div style="left:1227px;top:165px;width:266px;height:25px;background:#fff;border:1px solid #a4a4ab"></div>
<div class="t" style="left:1231px;top:173px;font-size:12.7px;color:#000">Arial</div>
<div style="left:1475px;top:166px;width:17px;height:23px;background:#e1e1e1;border:1px solid #acacac"></div>
<svg style="left:1479px;top:175.5px;" width="9" height="5" viewBox="0 0 9 5"><path d="M0.5 0.5L4.5 4.5 8.5 0.5" fill="none" stroke="#444" stroke-width="1.2"/></svg>
<div style="left:1499px;top:165px;width:53px;height:25px;background:#fff;border:1px solid #a4a4ab"></div>
<div class="t" style="left:1503px;top:173px;font-size:12.7px;color:#000">10</div>
<div style="left:1534px;top:166px;width:17px;height:23px;background:#e1e1e1;border:1px solid #acacac"></div>
<svg style="left:1538px;top:175.5px;" width="9" height="5" viewBox="0 0 9 5"><path d="M0.5 0.5L4.5 4.5 8.5 0.5" fill="none" stroke="#444" stroke-width="1.2"/></svg>
<div style="left:1227px;top:201px;width:140px;height:31px;background:linear-gradient(#f7f7f7,#fdfdfd);border:1px solid #e6e6e6"></div>
<div style="left:1229px;top:203px;width:25px;height:26px;background:#cce8ff;border:1px solid #99d1ff"></div>
<svg style="left:1233px;top:208px;" width="16" height="16" viewBox="0 0 16 16"><rect x="0.6" y="0.6" width="14.8" height="14.8" rx="2" fill="#f4f4f4" stroke="#111" stroke-width="1.2"/><path d="M4.5 12L8 4 11.5 12M5.8 9.5h4.4" fill="none" stroke="#111" stroke-width="1.9"/></svg>
<svg style="left:1258px;top:208px;" width="16" height="16" viewBox="0 0 16 16"><rect x="0.6" y="0.6" width="14.8" height="14.8" rx="2" fill="#f4f4f4" stroke="#111" stroke-width="1.2"/><path d="M4.5 12L9 4 10.5 12M6.2 9.5h4.4" fill="none" stroke="#111" stroke-width="1"/></svg>
<svg style="left:1282px;top:208px;" width="16" height="16" viewBox="0 0 16 16"><rect x="0.6" y="0.6" width="14.8" height="14.8" rx="2" fill="#f4f4f4" stroke="#111" stroke-width="1.2"/><path d="M5 11L8 4 11 11M6 8.5h4" fill="none" stroke="#111" stroke-width="1.1"/><path d="M4 13h8" stroke="#111"/></svg>
<svg style="left:1305px;top:214px;" width="7" height="4" viewBox="0 0 7 4"><path d="M0 0h7L3.5 4z" fill="#000"/></svg>
<svg style="left:1319px;top:208px;" width="16" height="16" viewBox="0 0 16 16"><rect x="0.6" y="0.6" width="14.8" height="14.8" rx="2" fill="#f4f4f4" stroke="#111" stroke-width="1.2"/><path d="M5 12L8 4 11 12M6 9h4" fill="none" stroke="#111" stroke-width="1.1"/><path d="M3.5 8h9" stroke="#111"/></svg>
<svg style="left:1344px;top:207px;" width="18" height="18" viewBox="0 0 18 18"><path d="M2.5 16.5L8.5 2.5 14.5 16.5M5 12h7" fill="none" stroke="#999" stroke-width="2.4"/><path d="M1.5 15.5L7.5 1.5 13.5 15.5M4 11h7" fill="none" stroke="#111" stroke-width="2.2"/></svg>
<div style="left:1499px;top:201px;width:52px;height:31px;background:linear-gradient(#f7f7f7,#fdfdfd);border:1px solid #e6e6e6"></div>
<svg style="left:1505px;top:208px;" width="16" height="16" viewBox="0 0 16 16"><rect x="0.6" y="0.6" width="14.8" height="14.8" rx="2" fill="#f4f4f4" stroke="#111" stroke-width="1.2"/><path d="M3.5 12L6.5 5 9.5 12M4.5 9.5h4" fill="none" stroke="#111"/><path d="M10.5 6l2-2.5 2 2.5z" fill="#111"/></svg>
<svg style="left:1530px;top:208px;" width="16" height="16" viewBox="0 0 16 16"><rect x="0.6" y="0.6" width="14.8" height="14.8" rx="2" fill="#f4f4f4" stroke="#111" stroke-width="1.2"/><path d="M3.5 12L6.5 6 9.5 12M4.5 10h4" fill="none" stroke="#111"/><path d="M10.5 3.5l2 2.5 2-2.5z" fill="#111"/></svg>
<div style="left:1228px;top:248px;width:53px;height:30px;background:linear-gradient(#f7f7f7,#fdfdfd);border:1px solid #e6e6e6"></div>
<svg style="left:1234px;top:255px;" width="16" height="16" viewBox="0 0 16 16"><rect x="0.6" y="0.6" width="14.8" height="14.8" rx="2" fill="#f4f4f4" stroke="#aaa" stroke-width="1.2"/><path d="M3.5 12L6.5 5 9.5 12M4.5 9.5h4" fill="none" stroke="#999"/><path d="M10.5 5l2-2 2 2M12.5 3v4" fill="none" stroke="#999"/></svg>
<svg style="left:1259px;top:255px;" width="16" height="16" viewBox="0 0 16 16"><rect x="0.6" y="0.6" width="14.8" height="14.8" rx="2" fill="#f4f4f4" stroke="#aaa" stroke-width="1.2"/><path d="M3.5 12L6.5 5 9.5 12M4.5 9.5h4" fill="none" stroke="#999"/><path d="M10.5 9l2 2 2-2M12.5 7v4" fill="none" stroke="#999"/></svg>
<div style="left:1291px;top:248px;width:39px;height:30px;background:linear-gradient(#f7f7f7,#fdfdfd);border:1px solid #e6e6e6"></div>
<svg style="left:1296px;top:255px;" width="16" height="16" viewBox="0 0 16 16"><path d="M1 7L3 1 5 7M6 1l2 6 2-6 2 6 2-6" fill="none" stroke="#aaa"/><path d="M3 12h10M3 12l2-2M3 12l2 2M13 12l-2-2M13 12l-2 2" fill="none" stroke="#aaa" stroke-width="1.3"/></svg>
<svg style="left:1318px;top:262px;" width="7" height="4" viewBox="0 0 7 4"><path d="M0 0h7L3.5 4z" fill="#999"/></svg>
<div style="left:1351px;top:248px;width:39px;height:30px;background:linear-gradient(#f7f7f7,#fdfdfd);border:1px solid #e6e6e6"></div>
<svg style="left:1355px;top:254px;" width="18" height="18" viewBox="0 0 18 18"><rect x="1" y="1" width="16" height="15" fill="#f4f4f4" stroke="#111" stroke-width="1.2"/><rect x="1" y="13" width="16" height="3" fill="#fff" stroke="#111" stroke-width="1"/><path d="M4.5 12L9 3 13.5 12M6 9h6" fill="none" stroke="#2a4a78" stroke-width="2"/></svg>
<svg style="left:1379px;top:262px;" width="7" height="4" viewBox="0 0 7 4"><path d="M0 0h7L3.5 4z" fill="#000"/></svg>
<div style="left:1221px;top:286px;width:338px;height:27px;background:linear-gradient(#e2e2e2,#f0f0f0)"></div>
<svg style="left:1226px;top:296px;" width="9" height="9" viewBox="0 0 9 9"><rect x="0.5" y="0.5" width="8" height="8" fill="#f8f8f8" stroke="#3a4a5a"/><path d="M2 4.5h5" stroke="#222"/></svg>
<div class="t" style="left:1240.5px;top:295px;font-size:13.2px;font-weight:bold;color:#000">Ausrichtung</div>
<svg style="left:1543px;top:292px;" width="12" height="11" viewBox="0 0 12 11"><rect x="0.5" y="0.5" width="11" height="10" fill="#fff" stroke="#2f5fa8"/><path d="M1 2.5h10" stroke="#8fb3e3" stroke-width="2"/><path d="M3 7.5h1.2M5.4 7.5h1.2M7.8 7.5h1.2" stroke="#1a2a4a" stroke-width="1.2"/></svg>
<div style="left:1226px;top:313px;width:103px;height:31px;background:linear-gradient(#f7f7f7,#fdfdfd);border:1px solid #e6e6e6"></div>
<div style="left:1252px;top:315px;width:25px;height:26px;background:#cce8ff;border:1px solid #99d1ff"></div>
<svg style="left:1232px;top:321px;" width="15" height="14" viewBox="0 0 15 14"><path d="M0 0.5H14" stroke="#2b4d80"/><path d="M0 2.5H10" stroke="#2b4d80"/><path d="M0 4.5H14" stroke="#2b4d80"/><path d="M0 6.5H10" stroke="#2b4d80"/><path d="M0 8.5H14" stroke="#2b4d80"/><path d="M0 10.5H10" stroke="#2b4d80"/><path d="M0 12.5H14" stroke="#2b4d80"/></svg>
<svg style="left:1257px;top:321px;" width="15" height="14" viewBox="0 0 15 14"><path d="M0 0.5H14" stroke="#2b4d80"/><path d="M2 2.5H12" stroke="#2b4d80"/><path d="M0 4.5H14" stroke="#2b4d80"/><path d="M2 6.5H12" stroke="#2b4d80"/><path d="M0 8.5H14" stroke="#2b4d80"/><path d="M2 10.5H12" stroke="#2b4d80"/><path d="M0 12.5H14" stroke="#2b4d80"/></svg>
<svg style="left:1282px;top:321px;" width="15" height="14" viewBox="0 0 15 14"><path d="M0 0.5H14" stroke="#2b4d80"/><path d="M4 2.5H14" stroke="#2b4d80"/><path d="M0 4.5H14" stroke="#2b4d80"/><path d="M4 6.5H14" stroke="#2b4d80"/><path d="M0 8.5H14" stroke="#2b4d80"/><path d="M4 10.5H14" stroke="#2b4d80"/><path d="M0 12.5H14" stroke="#2b4d80"/></svg>
<svg style="left:1307px;top:321px;" width="15" height="14" viewBox="0 0 15 14"><path d="M0 0.5H14" stroke="#2b4d80"/><path d="M0 2.5H14" stroke="#2b4d80"/><path d="M0 4.5H14" stroke="#2b4d80"/><path d="M0 6.5H14" stroke="#2b4d80"/><path d="M0 8.5H14" stroke="#2b4d80"/><path d="M0 10.5H14" stroke="#2b4d80"/><path d="M0 12.5H14" stroke="#2b4d80"/></svg>
<div style="left:1351px;top:313px;width:79px;height:31px;background:linear-gradient(#f7f7f7,#fdfdfd);border:1px solid #e6e6e6"></div>
<svg style="left:1358px;top:320px;" width="66" height="16" viewBox="0 0 66 16"><path d="M0 1.5h14M0 3.5h9M0 5.5h14" stroke="#2b4d80"/><path d="M25 5.5h14M25 7.5h9M25 9.5h14" stroke="#2b4d80"/><path d="M50 10.5h14M50 12.5h9M50 14.5h14" stroke="#2b4d80"/></svg>
<div class="t" style="left:1227px;top:364px;font-size:12.7px;color:#8c8c8c"><u>L</u>inker Einzug</div>
<div style="left:1340px;top:364px;width:13px;height:13px;background:#fff;border:1px solid #333"></div>
<div class="t" style="left:1357px;top:366px;font-size:12.7px;color:#000">Zeilenum<u>b</u>ruch</div>
<div style="left:1227px;top:381px;width:96px;height:26px;background:#fff;border:1px solid #7ea4d4"></div>
<div class="t" style="left:1231px;top:389px;font-size:12.7px;color:#8c8c8c">0 pt</div>
<div style="left:1305px;top:383px;width:16px;height:11px;background:#f2f2f2;border:1px solid #dcdcdc"></div>
<div style="left:1305px;top:394px;width:16px;height:11px;background:#f2f2f2;border:1px solid #dcdcdc"></div>
<svg style="left:1309px;top:386px;" width="8" height="4" viewBox="0 0 8 4"><path d="M0 4L4 0 8 4z" fill="#555"/></svg>
<svg style="left:1309px;top:398px;" width="8" height="4" viewBox="0 0 8 4"><path d="M0 0L4 4 8 0z" fill="#555"/></svg>
<div style="left:1340px;top:394px;width:13px;height:13px;background:#fff;border:1px solid #d4d4d4"></div>
<div class="t" style="left:1357px;top:395px;font-size:12.7px;color:#8c8c8c">Z<u>e</u>llen verbinden</div>
<div class="t" style="left:1227.00px;top:421px;font-size:12.7px;color:#000;transform:scaleX(1.0197);transform-origin:0 0;"><u>T</u>extausrichtung</div>
<svg style="left:1226px;top:442px;" width="52" height="52" viewBox="0 0 52 52"><circle cx="25.5" cy="25.5" r="24" fill="none" stroke="#4a6a9a" stroke-width="1.1"/><path d="M25.5 25.5H49" stroke="#4a6a9a" stroke-width="1.3"/><rect x="24" y="24" width="3" height="3" fill="#4a6a9a"/></svg>
<div style="left:1298px;top:449px;width:138px;height:25px;background:#fff;border:1px solid #a4a4ab"></div>
<div class="t" style="left:1302px;top:457px;font-size:12.7px;color:#000">0 Grad</div>
<div style="left:1418px;top:450px;width:17px;height:23px;background:#e1e1e1;border:1px solid #acacac"></div>
<svg style="left:1422px;top:459.5px;" width="9" height="5" viewBox="0 0 9 5"><path d="M0.5 0.5L4.5 4.5 8.5 0.5" fill="none" stroke="#444" stroke-width="1.2"/></svg>
<div style="left:1298px;top:489px;width:13px;height:13px;background:#fff;border:1px solid #333"></div>
<div class="t" style="left:1315px;top:491px;font-size:12.7px;color:#000"><u>S</u>enkrecht gestapelt</div>
<div style="left:1221px;top:513px;width:338px;height:27px;background:linear-gradient(#e2e2e2,#f0f0f0)"></div>
<svg style="left:1226px;top:523px;" width="9" height="9" viewBox="0 0 9 9"><rect x="0.5" y="0.5" width="8" height="8" fill="#f8f8f8" stroke="#3a4a5a"/><path d="M2 4.5h5" stroke="#222"/></svg>
<div class="t" style="left:1240.60px;top:522px;font-size:13.2px;color:#000;font-weight:bold;transform:scaleX(0.9638);transform-origin:0 0;">Erscheinungsbild der Zelle</div>
<svg style="left:1543px;top:519px;" width="12" height="11" viewBox="0 0 12 11"><rect x="0.5" y="0.5" width="11" height="10" fill="#fff" stroke="#2f5fa8"/><path d="M1 2.5h10" stroke="#8fb3e3" stroke-width="2"/><path d="M3 7.5h1.2M5.4 7.5h1.2M7.8 7.5h1.2" stroke="#1a2a4a" stroke-width="1.2"/></svg>
<div class="t" style="left:1227.00px;top:546px;font-size:12.7px;color:#000;transform:scaleX(1.0334);transform-origin:0 0;">Zell<u>h</u>intergrund:</div>
<div style="left:1226px;top:562px;width:99px;height:26px;background:linear-gradient(#f7f7f7,#fdfdfd);border:1px solid #e6e6e6"></div>
<svg style="left:1233px;top:566px;" width="16" height="15" viewBox="0 0 16 15"><path d="M2 7l5-5 6 6-5 5z" fill="#c8dcf4" stroke="#3a6ab0"/><path d="M7 2c3-1 6 1 6 6" fill="none" stroke="#222" stroke-width="1.4"/></svg>
<div style="left:1250px;top:568px;width:56px;height:12px;background:#fff;border:1px solid #4a6a9a"></div>
<div style="left:1252px;top:570px;width:52px;height:8px;border:1px solid #000"></div>
<svg style="left:1313px;top:573px;" width="7" height="4" viewBox="0 0 7 4"><path d="M0 0h7L3.5 4z" fill="#000"/></svg>
<div class="t" style="left:1227px;top:610px;font-size:12.7px;color:#000">Zell<u>u</u>mrandung:</div>
<div style="left:1226px;top:626px;width:66px;height:57px;background:linear-gradient(#f7f7f7,#fdfdfd);border:1px solid #e6e6e6"></div>
<div style="left:1232px;top:633px;width:41px;height:41px;background:#fafafa;border:1.5px solid #000"></div>
<svg style="left:1236px;top:637px;" width="33" height="33" viewBox="0 0 33 33"><path d="M16.5 2v30M2 16.5h30" stroke="#4a6a9a" stroke-dasharray="1 2"/></svg>
<svg style="left:1280px;top:653px;" width="7" height="4" viewBox="0 0 7 4"><path d="M0 0h7L3.5 4z" fill="#000"/></svg>
<div style="left:1305px;top:626px;width:99px;height:26px;background:linear-gradient(#f7f7f7,#fdfdfd);border:1px solid #e6e6e6"></div>
<div style="left:1311px;top:638px;width:74px;height:1px;background:#000"></div>
<svg style="left:1392px;top:637px;" width="7" height="4" viewBox="0 0 7 4"><path d="M0 0h7L3.5 4z" fill="#000"/></svg>
<div style="left:1305px;top:663px;width:99px;height:27px;background:linear-gradient(#f7f7f7,#fdfdfd);border:1px solid #e6e6e6"></div>
<svg style="left:1309px;top:669px;" width="18" height="14" viewBox="0 0 18 14"><path d="M2 11l9-9 3 3-9 9H2z" fill="#f0c040" stroke="#6a4a10" stroke-width="0.9"/><path d="M10 13h7" stroke="#2a5aa0" stroke-width="1.6"/></svg>
<div style="left:1329px;top:670px;width:56px;height:12px;background:#000;border:1px solid #4a6a9a"></div>
<div style="left:1330px;top:671px;width:54px;height:10px;background:#000;border:1px solid #fff"></div>
<div style="left:1331px;top:672px;width:52px;height:8px;background:#000"></div>
<svg style="left:1392px;top:674px;" width="7" height="4" viewBox="0 0 7 4"><path d="M0 0h7L3.5 4z" fill="#000"/></svg>
<div style="left:1227px;top:706px;width:13px;height:13px;background:#fff;border:1px solid #333"></div>
<div class="t" style="left:1244.5px;top:708px;font-size:12.7px;color:#000"><u>G</u>itternetzlinien anzeigen</div>
<div style="left:1221px;top:733px;width:338px;height:27px;background:linear-gradient(#e2e2e2,#f0f0f0)"></div>
<svg style="left:1226px;top:743px;" width="9" height="9" viewBox="0 0 9 9"><rect x="0.5" y="0.5" width="8" height="8" fill="#f8f8f8" stroke="#3a4a5a"/><path d="M2 4.5h5" stroke="#222"/><path d="M4.5 2v5" stroke="#222"/></svg>
<div class="t" style="left:1240.5px;top:742px;font-size:13.2px;font-weight:bold;color:#000">Zahlenformat</div>
<svg style="left:1543px;top:739px;" width="12" height="11" viewBox="0 0 12 11"><rect x="0.5" y="0.5" width="11" height="10" fill="#fff" stroke="#2f5fa8"/><path d="M1 2.5h10" stroke="#8fb3e3" stroke-width="2"/><path d="M3 7.5h1.2M5.4 7.5h1.2M7.8 7.5h1.2" stroke="#1a2a4a" stroke-width="1.2"/></svg>
<div style="left:1221px;top:760px;width:338px;height:1px;background:#dcdcdc"></div></body></html>
